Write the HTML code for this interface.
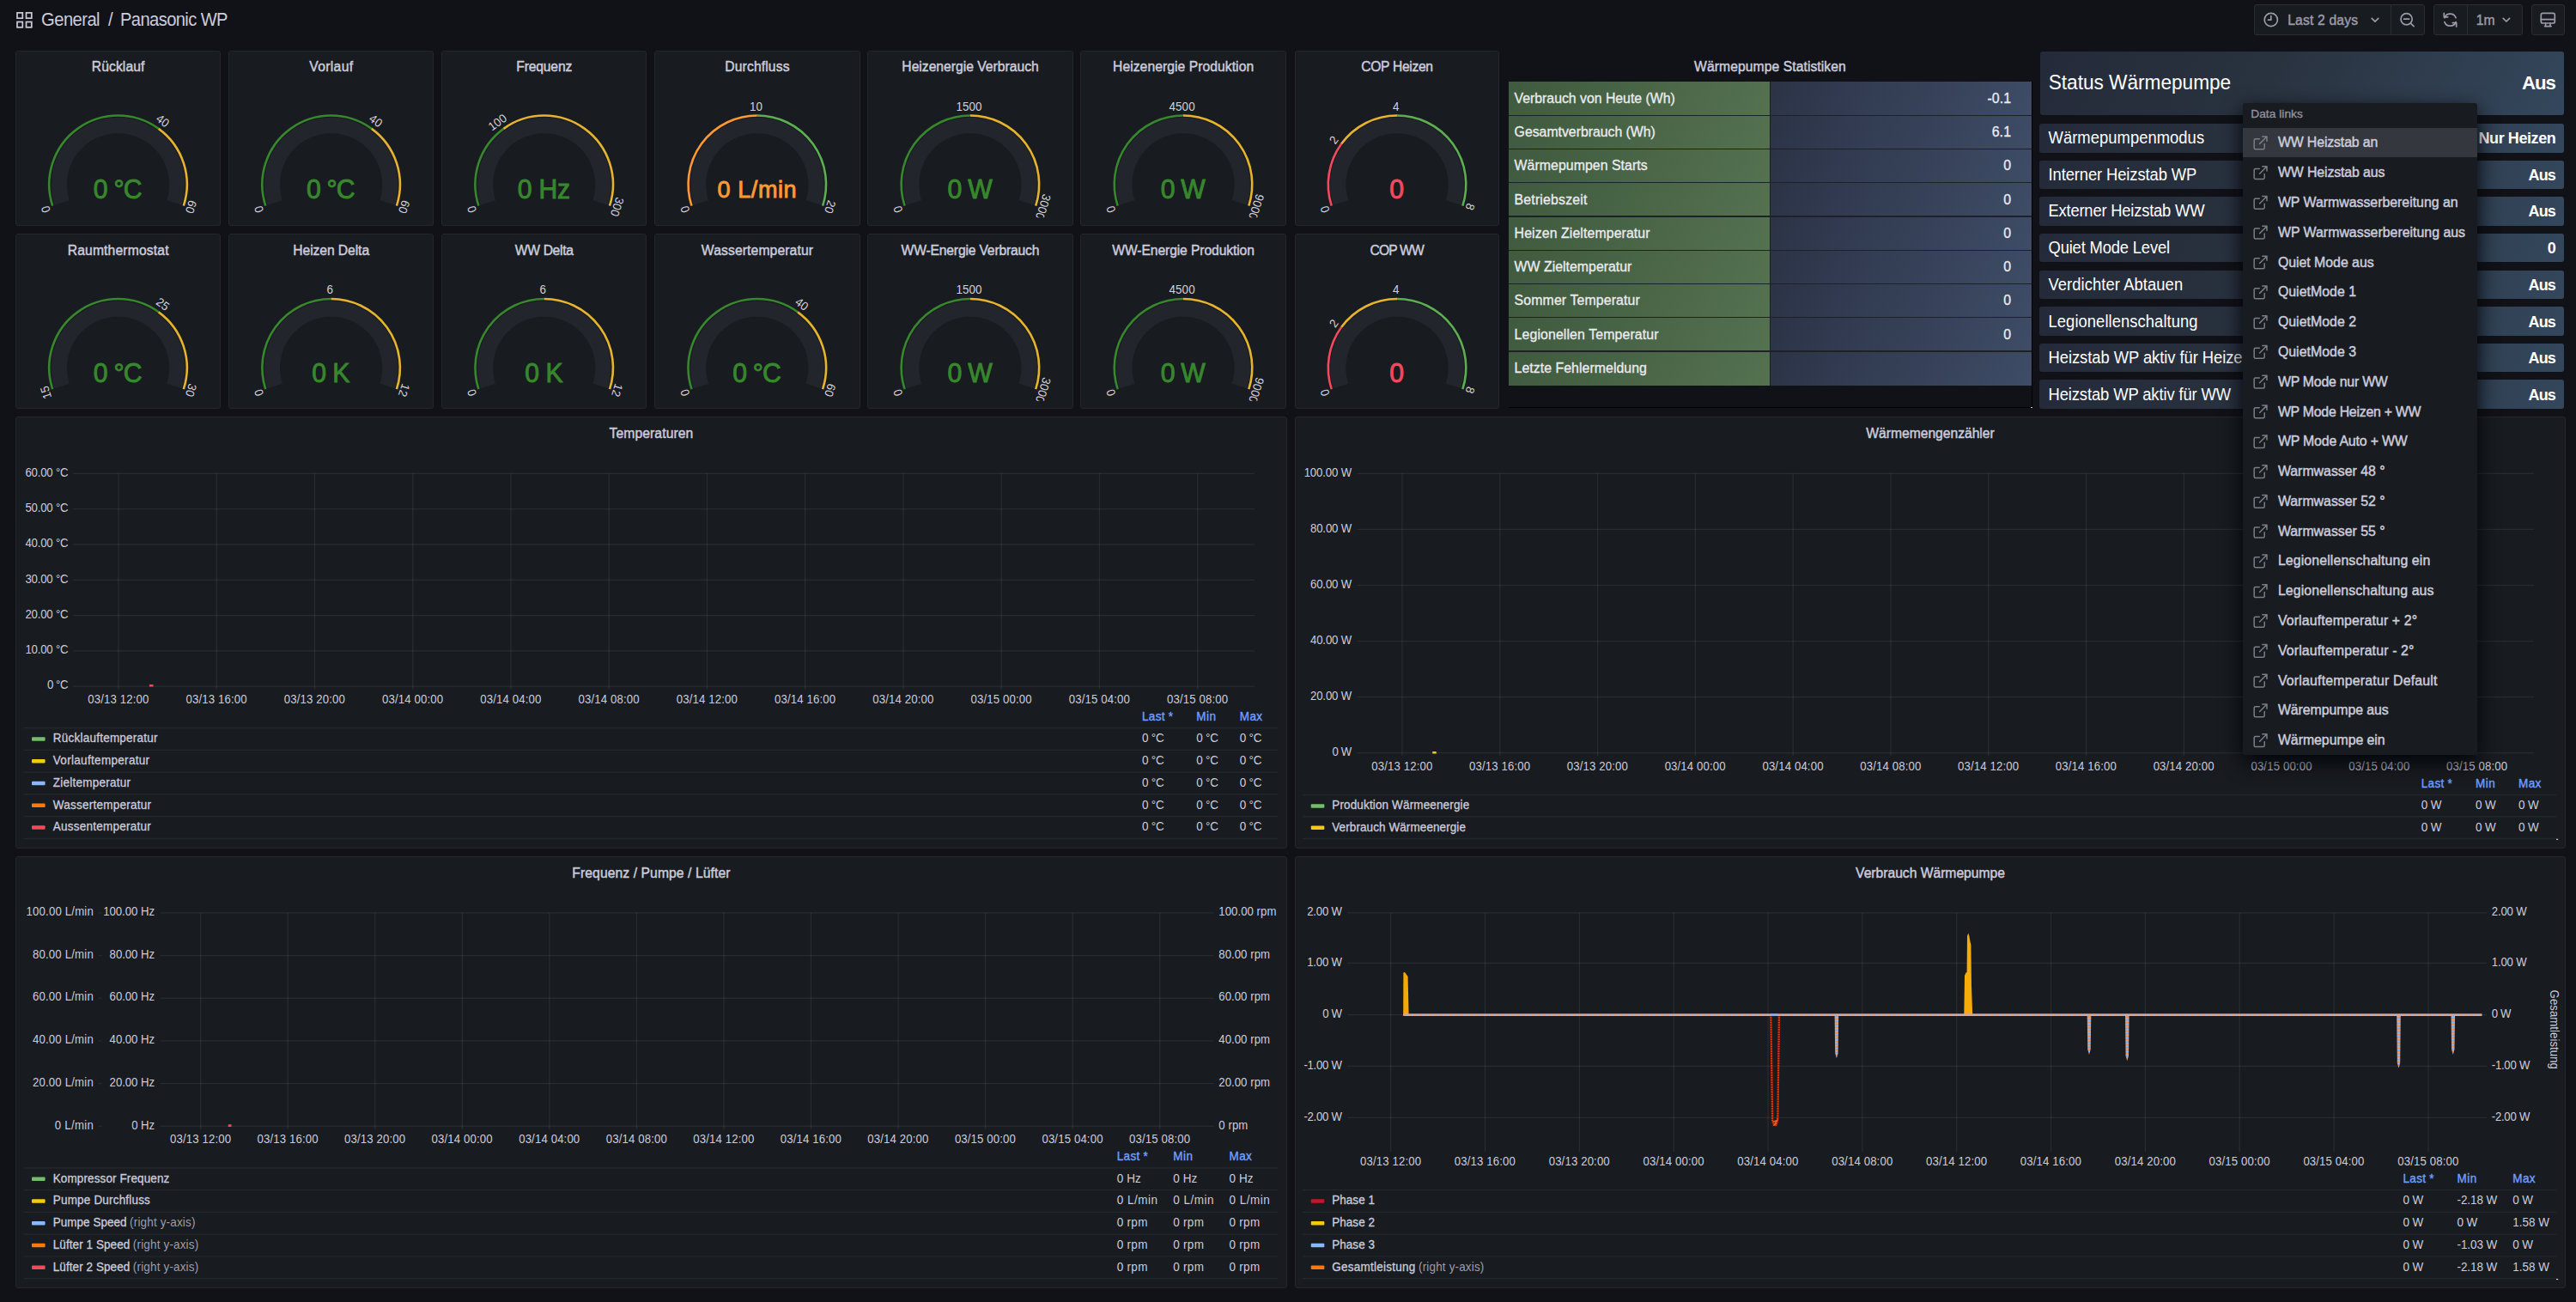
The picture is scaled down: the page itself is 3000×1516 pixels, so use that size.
<!DOCTYPE html>
<html lang="de"><head><meta charset="utf-8"><title>Panasonic WP - Grafana</title>
<style>
html,body{margin:0;padding:0;background:#111217}
body{width:3000px;height:1516px;overflow:hidden;position:relative;font-family:"Liberation Sans",sans-serif}
#wrap{position:absolute;left:0;top:0;width:3000px;height:1516px;overflow:hidden}
#wrap>div,#menu>div{position:absolute}
svg{position:absolute;left:0;top:0;font-family:"Liberation Sans",sans-serif}
text{white-space:pre}

</style></head><body><div id="wrap">
<div style="left:2625.10px;top:5.00px;width:159.50px;height:35.60px;background:#181b1f;border:1px solid #2a2d33;box-sizing:border-box;border-radius:3px 0 0 3px"></div>
<div style="left:2783.60px;top:5.00px;width:40.20px;height:35.60px;background:#181b1f;border:1px solid #2a2d33;box-sizing:border-box;border-radius:0 3px 3px 0"></div>
<div style="left:2833.80px;top:5.00px;width:40.40px;height:35.60px;background:#181b1f;border:1px solid #2a2d33;box-sizing:border-box;border-radius:3px 0 0 3px"></div>
<div style="left:2873.20px;top:5.00px;width:64.90px;height:35.60px;background:#181b1f;border:1px solid #2a2d33;box-sizing:border-box;border-radius:0 3px 3px 0"></div>
<div style="left:2947.90px;top:5.00px;width:39.50px;height:35.60px;background:#181b1f;border:1px solid #2a2d33;box-sizing:border-box;border-radius:3px"></div>
<div style="left:17.90px;top:58.90px;width:239.40px;height:204.00px;background:#181b1f;border:1px solid #23262b;border-radius:3px;box-sizing:border-box"></div>
<div style="left:266.00px;top:58.90px;width:239.40px;height:204.00px;background:#181b1f;border:1px solid #23262b;border-radius:3px;box-sizing:border-box"></div>
<div style="left:514.10px;top:58.90px;width:239.40px;height:204.00px;background:#181b1f;border:1px solid #23262b;border-radius:3px;box-sizing:border-box"></div>
<div style="left:762.20px;top:58.90px;width:239.40px;height:204.00px;background:#181b1f;border:1px solid #23262b;border-radius:3px;box-sizing:border-box"></div>
<div style="left:1010.30px;top:58.90px;width:239.40px;height:204.00px;background:#181b1f;border:1px solid #23262b;border-radius:3px;box-sizing:border-box"></div>
<div style="left:1258.40px;top:58.90px;width:239.40px;height:204.00px;background:#181b1f;border:1px solid #23262b;border-radius:3px;box-sizing:border-box"></div>
<div style="left:1507.80px;top:58.90px;width:238.70px;height:204.00px;background:#181b1f;border:1px solid #23262b;border-radius:3px;box-sizing:border-box"></div>
<div style="left:17.90px;top:272.30px;width:239.40px;height:203.60px;background:#181b1f;border:1px solid #23262b;border-radius:3px;box-sizing:border-box"></div>
<div style="left:266.00px;top:272.30px;width:239.40px;height:203.60px;background:#181b1f;border:1px solid #23262b;border-radius:3px;box-sizing:border-box"></div>
<div style="left:514.10px;top:272.30px;width:239.40px;height:203.60px;background:#181b1f;border:1px solid #23262b;border-radius:3px;box-sizing:border-box"></div>
<div style="left:762.20px;top:272.30px;width:239.40px;height:203.60px;background:#181b1f;border:1px solid #23262b;border-radius:3px;box-sizing:border-box"></div>
<div style="left:1010.30px;top:272.30px;width:239.40px;height:203.60px;background:#181b1f;border:1px solid #23262b;border-radius:3px;box-sizing:border-box"></div>
<div style="left:1258.40px;top:272.30px;width:239.40px;height:203.60px;background:#181b1f;border:1px solid #23262b;border-radius:3px;box-sizing:border-box"></div>
<div style="left:1507.80px;top:272.30px;width:238.70px;height:203.60px;background:#181b1f;border:1px solid #23262b;border-radius:3px;box-sizing:border-box"></div>
<div style="left:1756.90px;top:94.90px;width:304.10px;height:38.90px;background:linear-gradient(120deg,#3f5a3e 0%,#547150 100%)"></div>
<div style="left:2062.00px;top:94.90px;width:304.00px;height:38.90px;background:linear-gradient(120deg,#2c3347 0%,#3e4c66 100%)"></div>
<div style="left:2061.00px;top:94.90px;width:1.00px;height:38.90px;background:#1c2025"></div>
<div style="left:1756.90px;top:133.80px;width:609.10px;height:1.16px;background:#1e2227"></div>
<div style="left:1756.90px;top:134.96px;width:304.10px;height:38.07px;background:linear-gradient(120deg,#3f5a3e 0%,#547150 100%)"></div>
<div style="left:2062.00px;top:134.96px;width:304.00px;height:38.07px;background:linear-gradient(120deg,#2c3347 0%,#3e4c66 100%)"></div>
<div style="left:2061.00px;top:134.96px;width:1.00px;height:38.07px;background:#1c2025"></div>
<div style="left:1756.90px;top:173.03px;width:609.10px;height:1.16px;background:#1e2227"></div>
<div style="left:1756.90px;top:174.19px;width:304.10px;height:38.07px;background:linear-gradient(120deg,#3f5a3e 0%,#547150 100%)"></div>
<div style="left:2062.00px;top:174.19px;width:304.00px;height:38.07px;background:linear-gradient(120deg,#2c3347 0%,#3e4c66 100%)"></div>
<div style="left:2061.00px;top:174.19px;width:1.00px;height:38.07px;background:#1c2025"></div>
<div style="left:1756.90px;top:212.26px;width:609.10px;height:1.16px;background:#1e2227"></div>
<div style="left:1756.90px;top:213.42px;width:304.10px;height:38.07px;background:linear-gradient(120deg,#3f5a3e 0%,#547150 100%)"></div>
<div style="left:2062.00px;top:213.42px;width:304.00px;height:38.07px;background:linear-gradient(120deg,#2c3347 0%,#3e4c66 100%)"></div>
<div style="left:2061.00px;top:213.42px;width:1.00px;height:38.07px;background:#1c2025"></div>
<div style="left:1756.90px;top:251.49px;width:609.10px;height:1.16px;background:#1e2227"></div>
<div style="left:1756.90px;top:252.65px;width:304.10px;height:38.07px;background:linear-gradient(120deg,#3f5a3e 0%,#547150 100%)"></div>
<div style="left:2062.00px;top:252.65px;width:304.00px;height:38.07px;background:linear-gradient(120deg,#2c3347 0%,#3e4c66 100%)"></div>
<div style="left:2061.00px;top:252.65px;width:1.00px;height:38.07px;background:#1c2025"></div>
<div style="left:1756.90px;top:290.72px;width:609.10px;height:1.16px;background:#1e2227"></div>
<div style="left:1756.90px;top:291.88px;width:304.10px;height:38.07px;background:linear-gradient(120deg,#3f5a3e 0%,#547150 100%)"></div>
<div style="left:2062.00px;top:291.88px;width:304.00px;height:38.07px;background:linear-gradient(120deg,#2c3347 0%,#3e4c66 100%)"></div>
<div style="left:2061.00px;top:291.88px;width:1.00px;height:38.07px;background:#1c2025"></div>
<div style="left:1756.90px;top:329.95px;width:609.10px;height:1.16px;background:#1e2227"></div>
<div style="left:1756.90px;top:331.11px;width:304.10px;height:38.07px;background:linear-gradient(120deg,#3f5a3e 0%,#547150 100%)"></div>
<div style="left:2062.00px;top:331.11px;width:304.00px;height:38.07px;background:linear-gradient(120deg,#2c3347 0%,#3e4c66 100%)"></div>
<div style="left:2061.00px;top:331.11px;width:1.00px;height:38.07px;background:#1c2025"></div>
<div style="left:1756.90px;top:369.18px;width:609.10px;height:1.16px;background:#1e2227"></div>
<div style="left:1756.90px;top:370.34px;width:304.10px;height:38.07px;background:linear-gradient(120deg,#3f5a3e 0%,#547150 100%)"></div>
<div style="left:2062.00px;top:370.34px;width:304.00px;height:38.07px;background:linear-gradient(120deg,#2c3347 0%,#3e4c66 100%)"></div>
<div style="left:2061.00px;top:370.34px;width:1.00px;height:38.07px;background:#1c2025"></div>
<div style="left:1756.90px;top:408.41px;width:609.10px;height:1.16px;background:#1e2227"></div>
<div style="left:1756.90px;top:409.57px;width:304.10px;height:39.43px;background:linear-gradient(120deg,#3f5a3e 0%,#547150 100%)"></div>
<div style="left:2062.00px;top:409.57px;width:304.00px;height:39.43px;background:linear-gradient(120deg,#2c3347 0%,#3e4c66 100%)"></div>
<div style="left:2061.00px;top:409.57px;width:1.00px;height:39.43px;background:#1c2025"></div>
<div style="left:1756.90px;top:474.00px;width:610.60px;height:1.20px;background:#000"></div>
<div style="left:2366.05px;top:94.80px;width:1.25px;height:380.40px;background:#000"></div>
<div style="left:2365.20px;top:474.05px;width:2.20px;height:1.00px;background:#c4c4c4"></div>
<div style="left:2376.10px;top:59.90px;width:609.90px;height:73.90px;background:linear-gradient(120deg,#242a39 0%,#29323f 42%,#34475c 100%);border-radius:3px"></div>
<div style="left:2375.30px;top:144.30px;width:611.10px;height:33.45px;background:linear-gradient(120deg,#242a39 0%,#29323f 42%,#34475c 100%);border-radius:3px"></div>
<div style="left:2375.30px;top:186.87px;width:611.10px;height:33.45px;background:linear-gradient(120deg,#242a39 0%,#29323f 42%,#34475c 100%);border-radius:3px"></div>
<div style="left:2375.30px;top:229.44px;width:611.10px;height:33.45px;background:linear-gradient(120deg,#242a39 0%,#29323f 42%,#34475c 100%);border-radius:3px"></div>
<div style="left:2375.30px;top:272.01px;width:611.10px;height:33.45px;background:linear-gradient(120deg,#242a39 0%,#29323f 42%,#34475c 100%);border-radius:3px"></div>
<div style="left:2375.30px;top:314.58px;width:611.10px;height:33.45px;background:linear-gradient(120deg,#242a39 0%,#29323f 42%,#34475c 100%);border-radius:3px"></div>
<div style="left:2375.30px;top:357.15px;width:611.10px;height:33.45px;background:linear-gradient(120deg,#242a39 0%,#29323f 42%,#34475c 100%);border-radius:3px"></div>
<div style="left:2375.30px;top:399.72px;width:611.10px;height:33.45px;background:linear-gradient(120deg,#242a39 0%,#29323f 42%,#34475c 100%);border-radius:3px"></div>
<div style="left:2375.30px;top:442.29px;width:611.10px;height:33.45px;background:linear-gradient(120deg,#242a39 0%,#29323f 42%,#34475c 100%);border-radius:3px"></div>
<div style="left:17.90px;top:484.80px;width:1481.10px;height:503.10px;background:#181b1f;border:1px solid #23262b;border-radius:3px;box-sizing:border-box"></div>
<div style="left:1507.80px;top:484.80px;width:1480.00px;height:503.10px;background:#181b1f;border:1px solid #23262b;border-radius:3px;box-sizing:border-box"></div>
<div style="left:17.90px;top:997.00px;width:1481.10px;height:502.90px;background:#181b1f;border:1px solid #23262b;border-radius:3px;box-sizing:border-box"></div>
<div style="left:1507.80px;top:997.00px;width:1480.00px;height:502.90px;background:#181b1f;border:1px solid #23262b;border-radius:3px;box-sizing:border-box"></div>
<svg width="3000" height="1516" viewBox="0 0 3000 1516">
<rect x="20.0" y="14.9" width="6.3" height="6.3" fill="none" stroke="#ccccdc" stroke-width="1.7"/>
<rect x="30.5" y="14.9" width="6.3" height="6.3" fill="none" stroke="#ccccdc" stroke-width="1.7"/>
<rect x="20.0" y="25.5" width="6.3" height="6.3" fill="none" stroke="#ccccdc" stroke-width="1.7"/>
<rect x="30.5" y="25.5" width="6.3" height="6.3" fill="none" stroke="#ccccdc" stroke-width="1.7"/>
<text transform="translate(48.10,30.00) scale(1,1.090)" font-size="20.16" fill="#ccccdc" letter-spacing="-0.546">General</text>
<text transform="translate(126.00,30.00) scale(1,1.090)" font-size="20.16" fill="#ccccdc" letter-spacing="2.717">/</text>
<text transform="translate(140.00,30.00) scale(1,1.090)" font-size="20.16" fill="#ccccdc" letter-spacing="-0.602">Panasonic WP</text>
<circle cx="2644.8" cy="23" r="7.6" fill="none" stroke="#9a9aa8" stroke-width="1.7" stroke-linecap="round" stroke-linejoin="round"/>
<path d="M2644.8 18.6v4.6h-3.2" fill="none" stroke="#9a9aa8" stroke-width="1.7" stroke-linecap="round" stroke-linejoin="round"/>
<text transform="translate(2664.20,28.70) scale(1,1.050)" font-size="15.68" fill="#9a9aa8" letter-spacing="0.164" stroke="#9a9aa8" stroke-width="0.44">Last 2 days</text>
<path d="M2762.2 21.3l3.8 3.8 3.8-3.8" fill="none" stroke="#9a9aa8" stroke-width="1.7" stroke-linecap="round" stroke-linejoin="round"/>
<circle cx="2802.6" cy="22.2" r="6.6" fill="none" stroke="#9a9aa8" stroke-width="1.7" stroke-linecap="round" stroke-linejoin="round"/>
<path d="M2799.6 22.2h6M2807.5 27.1l3.6 3.6" fill="none" stroke="#9a9aa8" stroke-width="1.7" stroke-linecap="round" stroke-linejoin="round"/>
<path d="M2846.92 20.81A7.0 7.0 0 0 1 2860.08 20.81" fill="none" stroke="#9a9aa8" stroke-width="1.7" stroke-linecap="round" stroke-linejoin="round"/>
<path d="M2860.08 25.59A7.0 7.0 0 0 1 2846.92 25.59" fill="none" stroke="#9a9aa8" stroke-width="1.7" stroke-linecap="round" stroke-linejoin="round"/>
<path d="M2846.32 15.41v4.4h4.4" fill="none" stroke="#9a9aa8" stroke-width="1.7" stroke-linecap="round" stroke-linejoin="round"/>
<path d="M2860.68 30.99v-4.4h-4.4" fill="none" stroke="#9a9aa8" stroke-width="1.7" stroke-linecap="round" stroke-linejoin="round"/>
<text transform="translate(2883.70,28.70) scale(1,1.050)" font-size="15.68" fill="#9a9aa8" stroke="#9a9aa8" stroke-width="0.44">1m</text>
<path d="M2915.2 21.3l3.7 3.7 3.7-3.7" fill="none" stroke="#9a9aa8" stroke-width="1.7" stroke-linecap="round" stroke-linejoin="round"/>
<rect x="2959.3" y="15.4" width="16" height="11.6" rx="2" fill="none" stroke="#9a9aa8" stroke-width="1.7" stroke-linecap="round" stroke-linejoin="round"/>
<path d="M2959.3 22.6h16M2963.6 30.6h7.4M2964.6 27.2v3.2M2970 27.2v3.2" fill="none" stroke="#9a9aa8" stroke-width="1.7" stroke-linecap="round" stroke-linejoin="round"/>
<text transform="translate(137.64,83.20) scale(1,1.100)" font-size="15.68" fill="#ccccdc" letter-spacing="0.084" text-anchor="middle" stroke="#ccccdc" stroke-width="0.44">Rücklauf</text>
<clipPath id="c17_59"><rect x="26.9" y="99.0" width="221.4" height="154.2"/></clipPath>
<g clip-path="url(#c17_59)">
<path d="M72.11 235.99A68.75 68.75 0 1 1 202.89 235.99" fill="none" stroke="#22252b" stroke-width="18.30"/>
<path d="M61.18 239.55A80.25 80.25 0 0 1 184.67 149.83" fill="none" stroke="#37872d" stroke-width="2.60"/>
<path d="M184.67 149.83A80.25 80.25 0 0 1 213.82 239.55" fill="none" stroke="#e6b32e" stroke-width="2.60"/>
<text transform="translate(57.96,242.07) rotate(252.00) scale(1,1.030)" font-size="13.40" fill="#d0d0de" letter-spacing="0.079" text-anchor="middle">0</text>
<text transform="translate(186.82,144.50) rotate(396.00) scale(1,1.030)" font-size="13.40" fill="#d0d0de" letter-spacing="0.079" text-anchor="middle">40</text>
<text transform="translate(217.98,239.42) rotate(468.00) scale(1,1.030)" font-size="13.40" fill="#d0d0de" letter-spacing="0.079" text-anchor="middle">60</text>
</g>
<text transform="translate(136.80,231.35) scale(1,1.050)" font-size="30.20" fill="#37872d" letter-spacing="-0.796" text-anchor="middle" stroke="#37872d" stroke-width="0.90">0 °C</text>
<text transform="translate(385.86,83.20) scale(1,1.100)" font-size="15.68" fill="#ccccdc" letter-spacing="0.314" text-anchor="middle" stroke="#ccccdc" stroke-width="0.44">Vorlauf</text>
<clipPath id="c266_59"><rect x="275.0" y="99.0" width="221.4" height="154.2"/></clipPath>
<g clip-path="url(#c266_59)">
<path d="M320.21 235.99A68.75 68.75 0 1 1 450.99 235.99" fill="none" stroke="#22252b" stroke-width="18.30"/>
<path d="M309.28 239.55A80.25 80.25 0 0 1 432.77 149.83" fill="none" stroke="#37872d" stroke-width="2.60"/>
<path d="M432.77 149.83A80.25 80.25 0 0 1 461.92 239.55" fill="none" stroke="#e6b32e" stroke-width="2.60"/>
<text transform="translate(306.06,242.07) rotate(252.00) scale(1,1.030)" font-size="13.40" fill="#d0d0de" letter-spacing="0.079" text-anchor="middle">0</text>
<text transform="translate(434.92,144.50) rotate(396.00) scale(1,1.030)" font-size="13.40" fill="#d0d0de" letter-spacing="0.079" text-anchor="middle">40</text>
<text transform="translate(466.08,239.42) rotate(468.00) scale(1,1.030)" font-size="13.40" fill="#d0d0de" letter-spacing="0.079" text-anchor="middle">60</text>
</g>
<text transform="translate(384.90,231.35) scale(1,1.050)" font-size="30.20" fill="#37872d" letter-spacing="-0.796" text-anchor="middle" stroke="#37872d" stroke-width="0.90">0 °C</text>
<text transform="translate(633.71,83.20) scale(1,1.100)" font-size="15.68" fill="#ccccdc" letter-spacing="-0.174" text-anchor="middle" stroke="#ccccdc" stroke-width="0.44">Frequenz</text>
<clipPath id="c514_59"><rect x="523.1" y="99.0" width="221.4" height="154.2"/></clipPath>
<g clip-path="url(#c514_59)">
<path d="M568.31 235.99A68.75 68.75 0 1 1 699.09 235.99" fill="none" stroke="#22252b" stroke-width="18.30"/>
<path d="M557.38 239.55A80.25 80.25 0 0 1 586.53 149.83" fill="none" stroke="#37872d" stroke-width="2.60"/>
<path d="M586.53 149.83A80.25 80.25 0 0 1 710.02 239.55" fill="none" stroke="#e6b32e" stroke-width="2.60"/>
<text transform="translate(554.16,242.07) rotate(252.00) scale(1,1.030)" font-size="13.40" fill="#d0d0de" letter-spacing="0.079" text-anchor="middle">0</text>
<text transform="translate(582.16,146.17) rotate(324.00) scale(1,1.030)" font-size="13.40" fill="#d0d0de" letter-spacing="0.079" text-anchor="middle">100</text>
<text transform="translate(714.18,239.42) rotate(468.00) scale(1,1.030)" font-size="13.40" fill="#d0d0de" letter-spacing="0.079" text-anchor="middle">300</text>
</g>
<text transform="translate(633.31,231.35) scale(1,1.050)" font-size="30.20" fill="#37872d" letter-spacing="-0.184" text-anchor="middle" stroke="#37872d" stroke-width="0.90">0 Hz</text>
<text transform="translate(881.97,83.20) scale(1,1.100)" font-size="15.68" fill="#ccccdc" letter-spacing="0.138" text-anchor="middle" stroke="#ccccdc" stroke-width="0.44">Durchfluss</text>
<clipPath id="c762_59"><rect x="771.2" y="99.0" width="221.4" height="154.2"/></clipPath>
<g clip-path="url(#c762_59)">
<path d="M816.41 235.99A68.75 68.75 0 1 1 947.19 235.99" fill="none" stroke="#22252b" stroke-width="18.30"/>
<path d="M805.48 239.55A80.25 80.25 0 0 1 881.80 134.50" fill="none" stroke="#ff9830" stroke-width="2.60"/>
<path d="M881.80 134.50A80.25 80.25 0 0 1 958.12 239.55" fill="none" stroke="#5cae50" stroke-width="2.60"/>
<text transform="translate(802.26,242.07) rotate(252.00) scale(1,1.030)" font-size="13.40" fill="#d0d0de" letter-spacing="0.079" text-anchor="middle">0</text>
<text transform="translate(880.41,128.66) rotate(360.00) scale(1,1.030)" font-size="13.40" fill="#d0d0de" letter-spacing="0.079" text-anchor="middle">10</text>
<text transform="translate(962.28,239.42) rotate(468.00) scale(1,1.030)" font-size="13.40" fill="#d0d0de" letter-spacing="0.079" text-anchor="middle">20</text>
</g>
<text transform="translate(881.81,230.20) scale(1,1.050)" font-size="27.00" fill="#ff9830" letter-spacing="0.610" text-anchor="middle" stroke="#ff9830" stroke-width="0.90">0 L/min</text>
<text transform="translate(1130.00,83.20) scale(1,1.100)" font-size="15.68" fill="#ccccdc" text-anchor="middle" stroke="#ccccdc" stroke-width="0.44">Heizenergie Verbrauch</text>
<clipPath id="c1010_59"><rect x="1019.3" y="99.0" width="221.4" height="154.2"/></clipPath>
<g clip-path="url(#c1010_59)">
<path d="M1064.51 235.99A68.75 68.75 0 1 1 1195.29 235.99" fill="none" stroke="#22252b" stroke-width="18.30"/>
<path d="M1053.58 239.55A80.25 80.25 0 0 1 1129.90 134.50" fill="none" stroke="#37872d" stroke-width="2.60"/>
<path d="M1129.90 134.50A80.25 80.25 0 0 1 1206.22 239.55" fill="none" stroke="#e6b32e" stroke-width="2.60"/>
<text transform="translate(1050.36,242.07) rotate(252.00) scale(1,1.030)" font-size="13.40" fill="#d0d0de" letter-spacing="0.079" text-anchor="middle">0</text>
<text transform="translate(1128.51,128.66) rotate(360.00) scale(1,1.030)" font-size="13.40" fill="#d0d0de" letter-spacing="0.079" text-anchor="middle">1500</text>
<text transform="translate(1210.38,239.42) rotate(468.00) scale(1,1.030)" font-size="13.40" fill="#d0d0de" letter-spacing="0.079" text-anchor="middle">3000</text>
</g>
<text transform="translate(1129.20,231.35) scale(1,1.050)" font-size="30.20" fill="#37872d" letter-spacing="-0.806" text-anchor="middle" stroke="#37872d" stroke-width="0.90">0 W</text>
<text transform="translate(1378.13,83.20) scale(1,1.100)" font-size="15.68" fill="#ccccdc" letter-spacing="0.060" text-anchor="middle" stroke="#ccccdc" stroke-width="0.44">Heizenergie Produktion</text>
<clipPath id="c1258_59"><rect x="1267.4" y="99.0" width="221.4" height="154.2"/></clipPath>
<g clip-path="url(#c1258_59)">
<path d="M1312.61 235.99A68.75 68.75 0 1 1 1443.39 235.99" fill="none" stroke="#22252b" stroke-width="18.30"/>
<path d="M1301.68 239.55A80.25 80.25 0 0 1 1378.00 134.50" fill="none" stroke="#37872d" stroke-width="2.60"/>
<path d="M1378.00 134.50A80.25 80.25 0 0 1 1454.32 239.55" fill="none" stroke="#e6b32e" stroke-width="2.60"/>
<text transform="translate(1298.46,242.07) rotate(252.00) scale(1,1.030)" font-size="13.40" fill="#d0d0de" letter-spacing="0.079" text-anchor="middle">0</text>
<text transform="translate(1376.61,128.66) rotate(360.00) scale(1,1.030)" font-size="13.40" fill="#d0d0de" letter-spacing="0.079" text-anchor="middle">4500</text>
<text transform="translate(1458.48,239.42) rotate(468.00) scale(1,1.030)" font-size="13.40" fill="#d0d0de" letter-spacing="0.079" text-anchor="middle">9000</text>
</g>
<text transform="translate(1377.30,231.35) scale(1,1.050)" font-size="30.20" fill="#37872d" letter-spacing="-0.806" text-anchor="middle" stroke="#37872d" stroke-width="0.90">0 W</text>
<text transform="translate(1626.98,83.20) scale(1,1.100)" font-size="15.68" fill="#ccccdc" letter-spacing="-0.338" text-anchor="middle" stroke="#ccccdc" stroke-width="0.44">COP Heizen</text>
<clipPath id="c1507_59"><rect x="1516.8" y="99.0" width="220.7" height="154.2"/></clipPath>
<g clip-path="url(#c1507_59)">
<path d="M1561.66 235.99A68.75 68.75 0 1 1 1692.44 235.99" fill="none" stroke="#22252b" stroke-width="18.30"/>
<path d="M1550.73 239.55A80.25 80.25 0 0 1 1562.13 167.58" fill="none" stroke="#f2495c" stroke-width="2.60"/>
<path d="M1562.13 167.58A80.25 80.25 0 0 1 1627.05 134.50" fill="none" stroke="#e6b32e" stroke-width="2.60"/>
<path d="M1627.05 134.50A80.25 80.25 0 0 1 1703.37 239.55" fill="none" stroke="#5cae50" stroke-width="2.60"/>
<text transform="translate(1547.51,242.07) rotate(252.00) scale(1,1.030)" font-size="13.40" fill="#d0d0de" letter-spacing="0.079" text-anchor="middle">0</text>
<text transform="translate(1557.11,165.66) rotate(306.00) scale(1,1.030)" font-size="13.40" fill="#d0d0de" letter-spacing="0.079" text-anchor="middle">2</text>
<text transform="translate(1625.66,128.66) rotate(360.00) scale(1,1.030)" font-size="13.40" fill="#d0d0de" letter-spacing="0.079" text-anchor="middle">4</text>
<text transform="translate(1707.53,239.42) rotate(468.00) scale(1,1.030)" font-size="13.40" fill="#d0d0de" letter-spacing="0.079" text-anchor="middle">8</text>
</g>
<text transform="translate(1626.93,231.35) scale(1,1.050)" font-size="30.20" fill="#f2495c" letter-spacing="0.369" text-anchor="middle" stroke="#f2495c" stroke-width="0.90">0</text>
<text transform="translate(137.68,296.70) scale(1,1.100)" font-size="15.68" fill="#ccccdc" letter-spacing="0.158" text-anchor="middle" stroke="#ccccdc" stroke-width="0.44">Raumthermostat</text>
<clipPath id="c17_272"><rect x="26.9" y="312.5" width="221.4" height="154.2"/></clipPath>
<g clip-path="url(#c17_272)">
<path d="M72.11 449.49A68.75 68.75 0 1 1 202.89 449.49" fill="none" stroke="#22252b" stroke-width="18.30"/>
<path d="M61.18 453.05A80.25 80.25 0 0 1 184.67 363.33" fill="none" stroke="#37872d" stroke-width="2.60"/>
<path d="M184.67 363.33A80.25 80.25 0 0 1 213.82 453.05" fill="none" stroke="#e6b32e" stroke-width="2.60"/>
<text transform="translate(57.96,455.57) rotate(252.00) scale(1,1.030)" font-size="13.40" fill="#d0d0de" letter-spacing="0.079" text-anchor="middle">15</text>
<text transform="translate(186.82,358.00) rotate(396.00) scale(1,1.030)" font-size="13.40" fill="#d0d0de" letter-spacing="0.079" text-anchor="middle">25</text>
<text transform="translate(217.98,452.92) rotate(468.00) scale(1,1.030)" font-size="13.40" fill="#d0d0de" letter-spacing="0.079" text-anchor="middle">30</text>
</g>
<text transform="translate(136.80,444.85) scale(1,1.050)" font-size="30.20" fill="#37872d" letter-spacing="-0.796" text-anchor="middle" stroke="#37872d" stroke-width="0.90">0 °C</text>
<text transform="translate(385.66,296.70) scale(1,1.100)" font-size="15.68" fill="#ccccdc" letter-spacing="-0.084" text-anchor="middle" stroke="#ccccdc" stroke-width="0.44">Heizen Delta</text>
<clipPath id="c266_272"><rect x="275.0" y="312.5" width="221.4" height="154.2"/></clipPath>
<g clip-path="url(#c266_272)">
<path d="M320.21 449.49A68.75 68.75 0 1 1 450.99 449.49" fill="none" stroke="#22252b" stroke-width="18.30"/>
<path d="M309.28 453.05A80.25 80.25 0 0 1 385.60 348.00" fill="none" stroke="#37872d" stroke-width="2.60"/>
<path d="M385.60 348.00A80.25 80.25 0 0 1 461.92 453.05" fill="none" stroke="#e6b32e" stroke-width="2.60"/>
<text transform="translate(306.06,455.57) rotate(252.00) scale(1,1.030)" font-size="13.40" fill="#d0d0de" letter-spacing="0.079" text-anchor="middle">0</text>
<text transform="translate(384.21,342.16) rotate(360.00) scale(1,1.030)" font-size="13.40" fill="#d0d0de" letter-spacing="0.079" text-anchor="middle">6</text>
<text transform="translate(466.08,452.92) rotate(468.00) scale(1,1.030)" font-size="13.40" fill="#d0d0de" letter-spacing="0.079" text-anchor="middle">12</text>
</g>
<text transform="translate(385.03,444.85) scale(1,1.050)" font-size="30.20" fill="#37872d" letter-spacing="-0.536" text-anchor="middle" stroke="#37872d" stroke-width="0.90">0 K</text>
<text transform="translate(633.63,296.70) scale(1,1.100)" font-size="15.68" fill="#ccccdc" letter-spacing="-0.333" text-anchor="middle" stroke="#ccccdc" stroke-width="0.44">WW Delta</text>
<clipPath id="c514_272"><rect x="523.1" y="312.5" width="221.4" height="154.2"/></clipPath>
<g clip-path="url(#c514_272)">
<path d="M568.31 449.49A68.75 68.75 0 1 1 699.09 449.49" fill="none" stroke="#22252b" stroke-width="18.30"/>
<path d="M557.38 453.05A80.25 80.25 0 0 1 633.70 348.00" fill="none" stroke="#37872d" stroke-width="2.60"/>
<path d="M633.70 348.00A80.25 80.25 0 0 1 710.02 453.05" fill="none" stroke="#e6b32e" stroke-width="2.60"/>
<text transform="translate(554.16,455.57) rotate(252.00) scale(1,1.030)" font-size="13.40" fill="#d0d0de" letter-spacing="0.079" text-anchor="middle">0</text>
<text transform="translate(632.31,342.16) rotate(360.00) scale(1,1.030)" font-size="13.40" fill="#d0d0de" letter-spacing="0.079" text-anchor="middle">6</text>
<text transform="translate(714.18,452.92) rotate(468.00) scale(1,1.030)" font-size="13.40" fill="#d0d0de" letter-spacing="0.079" text-anchor="middle">12</text>
</g>
<text transform="translate(633.13,444.85) scale(1,1.050)" font-size="30.20" fill="#37872d" letter-spacing="-0.536" text-anchor="middle" stroke="#37872d" stroke-width="0.90">0 K</text>
<text transform="translate(881.96,296.70) scale(1,1.100)" font-size="15.68" fill="#ccccdc" letter-spacing="0.120" text-anchor="middle" stroke="#ccccdc" stroke-width="0.44">Wassertemperatur</text>
<clipPath id="c762_272"><rect x="771.2" y="312.5" width="221.4" height="154.2"/></clipPath>
<g clip-path="url(#c762_272)">
<path d="M816.41 449.49A68.75 68.75 0 1 1 947.19 449.49" fill="none" stroke="#22252b" stroke-width="18.30"/>
<path d="M805.48 453.05A80.25 80.25 0 0 1 928.97 363.33" fill="none" stroke="#37872d" stroke-width="2.60"/>
<path d="M928.97 363.33A80.25 80.25 0 0 1 958.12 453.05" fill="none" stroke="#e6b32e" stroke-width="2.60"/>
<text transform="translate(802.26,455.57) rotate(252.00) scale(1,1.030)" font-size="13.40" fill="#d0d0de" letter-spacing="0.079" text-anchor="middle">0</text>
<text transform="translate(931.12,358.00) rotate(396.00) scale(1,1.030)" font-size="13.40" fill="#d0d0de" letter-spacing="0.079" text-anchor="middle">40</text>
<text transform="translate(962.28,452.92) rotate(468.00) scale(1,1.030)" font-size="13.40" fill="#d0d0de" letter-spacing="0.079" text-anchor="middle">60</text>
</g>
<text transform="translate(881.10,444.85) scale(1,1.050)" font-size="30.20" fill="#37872d" letter-spacing="-0.796" text-anchor="middle" stroke="#37872d" stroke-width="0.90">0 °C</text>
<text transform="translate(1129.91,296.70) scale(1,1.100)" font-size="15.68" fill="#ccccdc" letter-spacing="-0.178" text-anchor="middle" stroke="#ccccdc" stroke-width="0.44">WW-Energie Verbrauch</text>
<clipPath id="c1010_272"><rect x="1019.3" y="312.5" width="221.4" height="154.2"/></clipPath>
<g clip-path="url(#c1010_272)">
<path d="M1064.51 449.49A68.75 68.75 0 1 1 1195.29 449.49" fill="none" stroke="#22252b" stroke-width="18.30"/>
<path d="M1053.58 453.05A80.25 80.25 0 0 1 1129.90 348.00" fill="none" stroke="#37872d" stroke-width="2.60"/>
<path d="M1129.90 348.00A80.25 80.25 0 0 1 1206.22 453.05" fill="none" stroke="#e6b32e" stroke-width="2.60"/>
<text transform="translate(1050.36,455.57) rotate(252.00) scale(1,1.030)" font-size="13.40" fill="#d0d0de" letter-spacing="0.079" text-anchor="middle">0</text>
<text transform="translate(1128.51,342.16) rotate(360.00) scale(1,1.030)" font-size="13.40" fill="#d0d0de" letter-spacing="0.079" text-anchor="middle">1500</text>
<text transform="translate(1210.38,452.92) rotate(468.00) scale(1,1.030)" font-size="13.40" fill="#d0d0de" letter-spacing="0.079" text-anchor="middle">3000</text>
</g>
<text transform="translate(1129.20,444.85) scale(1,1.050)" font-size="30.20" fill="#37872d" letter-spacing="-0.806" text-anchor="middle" stroke="#37872d" stroke-width="0.90">0 W</text>
<text transform="translate(1378.05,296.70) scale(1,1.100)" font-size="15.68" fill="#ccccdc" letter-spacing="-0.104" text-anchor="middle" stroke="#ccccdc" stroke-width="0.44">WW-Energie Produktion</text>
<clipPath id="c1258_272"><rect x="1267.4" y="312.5" width="221.4" height="154.2"/></clipPath>
<g clip-path="url(#c1258_272)">
<path d="M1312.61 449.49A68.75 68.75 0 1 1 1443.39 449.49" fill="none" stroke="#22252b" stroke-width="18.30"/>
<path d="M1301.68 453.05A80.25 80.25 0 0 1 1378.00 348.00" fill="none" stroke="#37872d" stroke-width="2.60"/>
<path d="M1378.00 348.00A80.25 80.25 0 0 1 1454.32 453.05" fill="none" stroke="#e6b32e" stroke-width="2.60"/>
<text transform="translate(1298.46,455.57) rotate(252.00) scale(1,1.030)" font-size="13.40" fill="#d0d0de" letter-spacing="0.079" text-anchor="middle">0</text>
<text transform="translate(1376.61,342.16) rotate(360.00) scale(1,1.030)" font-size="13.40" fill="#d0d0de" letter-spacing="0.079" text-anchor="middle">4500</text>
<text transform="translate(1458.48,452.92) rotate(468.00) scale(1,1.030)" font-size="13.40" fill="#d0d0de" letter-spacing="0.079" text-anchor="middle">9000</text>
</g>
<text transform="translate(1377.30,444.85) scale(1,1.050)" font-size="30.20" fill="#37872d" letter-spacing="-0.806" text-anchor="middle" stroke="#37872d" stroke-width="0.90">0 W</text>
<text transform="translate(1626.73,296.70) scale(1,1.100)" font-size="15.68" fill="#ccccdc" letter-spacing="-0.841" text-anchor="middle" stroke="#ccccdc" stroke-width="0.44">COP WW</text>
<clipPath id="c1507_272"><rect x="1516.8" y="312.5" width="220.7" height="154.2"/></clipPath>
<g clip-path="url(#c1507_272)">
<path d="M1561.66 449.49A68.75 68.75 0 1 1 1692.44 449.49" fill="none" stroke="#22252b" stroke-width="18.30"/>
<path d="M1550.73 453.05A80.25 80.25 0 0 1 1562.13 381.08" fill="none" stroke="#f2495c" stroke-width="2.60"/>
<path d="M1562.13 381.08A80.25 80.25 0 0 1 1627.05 348.00" fill="none" stroke="#e6b32e" stroke-width="2.60"/>
<path d="M1627.05 348.00A80.25 80.25 0 0 1 1703.37 453.05" fill="none" stroke="#5cae50" stroke-width="2.60"/>
<text transform="translate(1547.51,455.57) rotate(252.00) scale(1,1.030)" font-size="13.40" fill="#d0d0de" letter-spacing="0.079" text-anchor="middle">0</text>
<text transform="translate(1557.11,379.16) rotate(306.00) scale(1,1.030)" font-size="13.40" fill="#d0d0de" letter-spacing="0.079" text-anchor="middle">2</text>
<text transform="translate(1625.66,342.16) rotate(360.00) scale(1,1.030)" font-size="13.40" fill="#d0d0de" letter-spacing="0.079" text-anchor="middle">4</text>
<text transform="translate(1707.53,452.92) rotate(468.00) scale(1,1.030)" font-size="13.40" fill="#d0d0de" letter-spacing="0.079" text-anchor="middle">8</text>
</g>
<text transform="translate(1626.93,444.85) scale(1,1.050)" font-size="30.20" fill="#f2495c" letter-spacing="0.369" text-anchor="middle" stroke="#f2495c" stroke-width="0.90">0</text>
<text transform="translate(2061.49,83.20) scale(1,1.100)" font-size="15.68" fill="#ccccdc" letter-spacing="0.078" text-anchor="middle" stroke="#ccccdc" stroke-width="0.44">Wärmepumpe Statistiken</text>
<text transform="translate(1763.60,119.98) scale(1,1.080)" font-size="15.90" fill="#ececf0" letter-spacing="-0.039" stroke="#ececf0" stroke-width="0.30">Verbrauch von Heute (Wh)</text>
<text transform="translate(2342.09,119.98) scale(1,1.080)" font-size="15.90" fill="#ececf0" letter-spacing="0.085" text-anchor="end" stroke="#ececf0" stroke-width="0.30">-0.1</text>
<text transform="translate(1763.60,159.21) scale(1,1.080)" font-size="15.90" fill="#ececf0" letter-spacing="-0.043" stroke="#ececf0" stroke-width="0.30">Gesamtverbrauch (Wh)</text>
<text transform="translate(2342.14,159.21) scale(1,1.080)" font-size="15.90" fill="#ececf0" letter-spacing="0.137" text-anchor="end" stroke="#ececf0" stroke-width="0.30">6.1</text>
<text transform="translate(1763.60,198.44) scale(1,1.080)" font-size="15.90" fill="#ececf0" letter-spacing="0.033" stroke="#ececf0" stroke-width="0.30">Wärmepumpen Starts</text>
<text transform="translate(2342.19,198.44) scale(1,1.080)" font-size="15.90" fill="#ececf0" letter-spacing="0.194" text-anchor="end" stroke="#ececf0" stroke-width="0.30">0</text>
<text transform="translate(1763.60,237.67) scale(1,1.080)" font-size="15.90" fill="#ececf0" letter-spacing="0.160" stroke="#ececf0" stroke-width="0.30">Betriebszeit</text>
<text transform="translate(2342.19,237.67) scale(1,1.080)" font-size="15.90" fill="#ececf0" letter-spacing="0.194" text-anchor="end" stroke="#ececf0" stroke-width="0.30">0</text>
<text transform="translate(1763.60,276.90) scale(1,1.080)" font-size="15.90" fill="#ececf0" letter-spacing="0.085" stroke="#ececf0" stroke-width="0.30">Heizen Zieltemperatur</text>
<text transform="translate(2342.19,276.90) scale(1,1.080)" font-size="15.90" fill="#ececf0" letter-spacing="0.194" text-anchor="end" stroke="#ececf0" stroke-width="0.30">0</text>
<text transform="translate(1763.60,316.13) scale(1,1.080)" font-size="15.90" fill="#ececf0" stroke="#ececf0" stroke-width="0.30">WW Zieltemperatur</text>
<text transform="translate(2342.19,316.13) scale(1,1.080)" font-size="15.90" fill="#ececf0" letter-spacing="0.194" text-anchor="end" stroke="#ececf0" stroke-width="0.30">0</text>
<text transform="translate(1763.60,355.36) scale(1,1.080)" font-size="15.90" fill="#ececf0" letter-spacing="0.109" stroke="#ececf0" stroke-width="0.30">Sommer Temperatur</text>
<text transform="translate(2342.19,355.36) scale(1,1.080)" font-size="15.90" fill="#ececf0" letter-spacing="0.194" text-anchor="end" stroke="#ececf0" stroke-width="0.30">0</text>
<text transform="translate(1763.60,394.59) scale(1,1.080)" font-size="15.90" fill="#ececf0" letter-spacing="0.104" stroke="#ececf0" stroke-width="0.30">Legionellen Temperatur</text>
<text transform="translate(2342.19,394.59) scale(1,1.080)" font-size="15.90" fill="#ececf0" letter-spacing="0.194" text-anchor="end" stroke="#ececf0" stroke-width="0.30">0</text>
<text transform="translate(1763.60,433.82) scale(1,1.080)" font-size="15.90" fill="#ececf0" letter-spacing="0.034" stroke="#ececf0" stroke-width="0.30">Letzte Fehlermeldung</text>
<text transform="translate(2385.70,103.80) scale(1,1.020)" font-size="22.70" fill="#ffffff" letter-spacing="-0.030">Status Wärmepumpe</text>
<text x="2975.72" y="103.60" font-size="22.20" fill="#ffffff" letter-spacing="-1.084" text-anchor="end" font-weight="bold">Aus</text>
<text transform="translate(2385.50,166.80) scale(1,1.060)" font-size="18.40" fill="#ffffff" letter-spacing="0.042">Wärmepumpenmodus</text>
<text x="2976.39" y="166.80" font-size="18.00" fill="#ffffff" letter-spacing="-0.410" text-anchor="end" font-weight="bold">Nur Heizen</text>
<text transform="translate(2385.50,209.57) scale(1,1.060)" font-size="18.40" fill="#ffffff" letter-spacing="-0.106">Interner Heizstab WP</text>
<text x="2975.92" y="209.57" font-size="18.00" fill="#ffffff" letter-spacing="-0.879" text-anchor="end" font-weight="bold">Aus</text>
<text transform="translate(2385.50,252.34) scale(1,1.060)" font-size="18.40" fill="#ffffff" letter-spacing="-0.211">Externer Heizstab WW</text>
<text x="2975.92" y="252.34" font-size="18.00" fill="#ffffff" letter-spacing="-0.879" text-anchor="end" font-weight="bold">Aus</text>
<text transform="translate(2385.50,295.11) scale(1,1.060)" font-size="18.40" fill="#ffffff" letter-spacing="-0.173">Quiet Mode Level</text>
<text x="2977.12" y="295.11" font-size="18.00" fill="#ffffff" letter-spacing="0.316" text-anchor="end" font-weight="bold">0</text>
<text transform="translate(2385.50,337.88) scale(1,1.060)" font-size="18.40" fill="#ffffff" letter-spacing="0.070">Verdichter Abtauen</text>
<text x="2975.92" y="337.88" font-size="18.00" fill="#ffffff" letter-spacing="-0.879" text-anchor="end" font-weight="bold">Aus</text>
<text transform="translate(2385.50,380.65) scale(1,1.060)" font-size="18.40" fill="#ffffff" letter-spacing="0.063">Legionellenschaltung</text>
<text x="2975.92" y="380.65" font-size="18.00" fill="#ffffff" letter-spacing="-0.879" text-anchor="end" font-weight="bold">Aus</text>
<text transform="translate(2385.50,423.42) scale(1,1.060)" font-size="18.40" fill="#ffffff" letter-spacing="-0.058">Heizstab WP aktiv für Heizen</text>
<text x="2975.92" y="423.42" font-size="18.00" fill="#ffffff" letter-spacing="-0.879" text-anchor="end" font-weight="bold">Aus</text>
<text transform="translate(2385.50,466.19) scale(1,1.060)" font-size="18.40" fill="#ffffff" letter-spacing="-0.112">Heizstab WP aktiv für WW</text>
<text x="2975.92" y="466.19" font-size="18.00" fill="#ffffff" letter-spacing="-0.879" text-anchor="end" font-weight="bold">Aus</text>
<text transform="translate(758.45,510.00) scale(1,1.100)" font-size="15.68" fill="#ccccdc" letter-spacing="0.105" text-anchor="middle" stroke="#ccccdc" stroke-width="0.44">Temperaturen</text>
<rect x="85.50" y="550.77" width="1375.25" height="1.25" fill="rgba(225,232,245,0.088)"/>
<text transform="translate(79.31,554.65) scale(1,1.040)" font-size="13.20" fill="#ccccdc" letter-spacing="-0.195" text-anchor="end">60.00 °C</text>
<rect x="85.50" y="592.06" width="1375.25" height="1.25" fill="rgba(225,232,245,0.088)"/>
<text transform="translate(79.31,595.94) scale(1,1.040)" font-size="13.20" fill="#ccccdc" letter-spacing="-0.195" text-anchor="end">50.00 °C</text>
<rect x="85.50" y="633.36" width="1375.25" height="1.25" fill="rgba(225,232,245,0.088)"/>
<text transform="translate(79.31,637.23) scale(1,1.040)" font-size="13.20" fill="#ccccdc" letter-spacing="-0.195" text-anchor="end">40.00 °C</text>
<rect x="85.50" y="674.64" width="1375.25" height="1.25" fill="rgba(225,232,245,0.088)"/>
<text transform="translate(79.31,678.52) scale(1,1.040)" font-size="13.20" fill="#ccccdc" letter-spacing="-0.195" text-anchor="end">30.00 °C</text>
<rect x="85.50" y="715.93" width="1375.25" height="1.25" fill="rgba(225,232,245,0.088)"/>
<text transform="translate(79.31,719.81) scale(1,1.040)" font-size="13.20" fill="#ccccdc" letter-spacing="-0.195" text-anchor="end">20.00 °C</text>
<rect x="85.50" y="757.23" width="1375.25" height="1.25" fill="rgba(225,232,245,0.088)"/>
<text transform="translate(79.31,761.10) scale(1,1.040)" font-size="13.20" fill="#ccccdc" letter-spacing="-0.195" text-anchor="end">10.00 °C</text>
<rect x="85.50" y="798.51" width="1375.25" height="1.25" fill="rgba(225,232,245,0.088)"/>
<text transform="translate(79.10,802.39) scale(1,1.040)" font-size="13.20" fill="#ccccdc" letter-spacing="-0.401" text-anchor="end">0 °C</text>
<rect x="137.32" y="551.25" width="1.25" height="251.25" fill="rgba(225,232,245,0.088)"/>
<text transform="translate(137.82,818.50) scale(1,1.040)" font-size="13.20" fill="#ccccdc" letter-spacing="0.139" text-anchor="middle">03/13 12:00</text>
<rect x="251.57" y="551.25" width="1.25" height="251.25" fill="rgba(225,232,245,0.088)"/>
<text transform="translate(252.07,818.50) scale(1,1.040)" font-size="13.20" fill="#ccccdc" letter-spacing="0.139" text-anchor="middle">03/13 16:00</text>
<rect x="365.82" y="551.25" width="1.25" height="251.25" fill="rgba(225,232,245,0.088)"/>
<text transform="translate(366.32,818.50) scale(1,1.040)" font-size="13.20" fill="#ccccdc" letter-spacing="0.139" text-anchor="middle">03/13 20:00</text>
<rect x="480.07" y="551.25" width="1.25" height="251.25" fill="rgba(225,232,245,0.088)"/>
<text transform="translate(480.57,818.50) scale(1,1.040)" font-size="13.20" fill="#ccccdc" letter-spacing="0.139" text-anchor="middle">03/14 00:00</text>
<rect x="594.33" y="551.25" width="1.25" height="251.25" fill="rgba(225,232,245,0.088)"/>
<text transform="translate(594.82,818.50) scale(1,1.040)" font-size="13.20" fill="#ccccdc" letter-spacing="0.139" text-anchor="middle">03/14 04:00</text>
<rect x="708.58" y="551.25" width="1.25" height="251.25" fill="rgba(225,232,245,0.088)"/>
<text transform="translate(709.07,818.50) scale(1,1.040)" font-size="13.20" fill="#ccccdc" letter-spacing="0.139" text-anchor="middle">03/14 08:00</text>
<rect x="822.83" y="551.25" width="1.25" height="251.25" fill="rgba(225,232,245,0.088)"/>
<text transform="translate(823.32,818.50) scale(1,1.040)" font-size="13.20" fill="#ccccdc" letter-spacing="0.139" text-anchor="middle">03/14 12:00</text>
<rect x="937.08" y="551.25" width="1.25" height="251.25" fill="rgba(225,232,245,0.088)"/>
<text transform="translate(937.57,818.50) scale(1,1.040)" font-size="13.20" fill="#ccccdc" letter-spacing="0.139" text-anchor="middle">03/14 16:00</text>
<rect x="1051.33" y="551.25" width="1.25" height="251.25" fill="rgba(225,232,245,0.088)"/>
<text transform="translate(1051.82,818.50) scale(1,1.040)" font-size="13.20" fill="#ccccdc" letter-spacing="0.139" text-anchor="middle">03/14 20:00</text>
<rect x="1165.58" y="551.25" width="1.25" height="251.25" fill="rgba(225,232,245,0.088)"/>
<text transform="translate(1166.07,818.50) scale(1,1.040)" font-size="13.20" fill="#ccccdc" letter-spacing="0.139" text-anchor="middle">03/15 00:00</text>
<rect x="1279.83" y="551.25" width="1.25" height="251.25" fill="rgba(225,232,245,0.088)"/>
<text transform="translate(1280.32,818.50) scale(1,1.040)" font-size="13.20" fill="#ccccdc" letter-spacing="0.139" text-anchor="middle">03/15 04:00</text>
<rect x="1394.08" y="551.25" width="1.25" height="251.25" fill="rgba(225,232,245,0.088)"/>
<text transform="translate(1394.57,818.50) scale(1,1.040)" font-size="13.20" fill="#ccccdc" letter-spacing="0.139" text-anchor="middle">03/15 08:00</text>
<rect x="174" y="797" width="4.5" height="2.5" fill="#f2495c"/>
<text transform="translate(1330.00,839.10) scale(1,1.030)" font-size="13.50" fill="#6e9fff" letter-spacing="0.326" stroke="#6e9fff" stroke-width="0.38">Last *</text>
<text transform="translate(1393.25,839.10) scale(1,1.030)" font-size="13.50" fill="#6e9fff" letter-spacing="0.568" stroke="#6e9fff" stroke-width="0.38">Min</text>
<text transform="translate(1443.75,839.10) scale(1,1.030)" font-size="13.50" fill="#6e9fff" letter-spacing="0.397" stroke="#6e9fff" stroke-width="0.38">Max</text>
<rect x="28.00" y="847.02" width="1460.00" height="1.25" fill="rgba(204,204,220,0.075)"/>
<rect x="28.00" y="872.77" width="1460.00" height="1.25" fill="rgba(204,204,220,0.075)"/>
<rect x="28.00" y="898.52" width="1460.00" height="1.25" fill="rgba(204,204,220,0.075)"/>
<rect x="28.00" y="924.27" width="1460.00" height="1.25" fill="rgba(204,204,220,0.075)"/>
<rect x="28.00" y="950.02" width="1460.00" height="1.25" fill="rgba(204,204,220,0.075)"/>
<rect x="28.00" y="975.77" width="1460.00" height="1.25" fill="rgba(204,204,220,0.075)"/>
<rect x="37.00" y="858.35" width="15.6" height="4.5" rx="1" fill="#73bf69"/>
<text transform="translate(61.75,864.35) scale(1,1.030)" font-size="13.50" fill="#ccccdc" letter-spacing="0.244" stroke="#ccccdc" stroke-width="0.30">Rücklauftemperatur</text>
<text transform="translate(1330.00,864.35) scale(1,1.030)" font-size="13.50" fill="#ccccdc" letter-spacing="-0.227">0 °C</text>
<text transform="translate(1393.25,864.35) scale(1,1.030)" font-size="13.50" fill="#ccccdc" letter-spacing="-0.227">0 °C</text>
<text transform="translate(1443.75,864.35) scale(1,1.030)" font-size="13.50" fill="#ccccdc" letter-spacing="-0.227">0 °C</text>
<rect x="37.00" y="884.10" width="15.6" height="4.5" rx="1" fill="#f2cc0c"/>
<text transform="translate(61.75,890.10) scale(1,1.030)" font-size="13.50" fill="#ccccdc" letter-spacing="0.324" stroke="#ccccdc" stroke-width="0.30">Vorlauftemperatur</text>
<text transform="translate(1330.00,890.10) scale(1,1.030)" font-size="13.50" fill="#ccccdc" letter-spacing="-0.227">0 °C</text>
<text transform="translate(1393.25,890.10) scale(1,1.030)" font-size="13.50" fill="#ccccdc" letter-spacing="-0.227">0 °C</text>
<text transform="translate(1443.75,890.10) scale(1,1.030)" font-size="13.50" fill="#ccccdc" letter-spacing="-0.227">0 °C</text>
<rect x="37.00" y="909.85" width="15.6" height="4.5" rx="1" fill="#8ab8ff"/>
<text transform="translate(61.75,915.85) scale(1,1.030)" font-size="13.50" fill="#ccccdc" letter-spacing="0.259" stroke="#ccccdc" stroke-width="0.30">Zieltemperatur</text>
<text transform="translate(1330.00,915.85) scale(1,1.030)" font-size="13.50" fill="#ccccdc" letter-spacing="-0.227">0 °C</text>
<text transform="translate(1393.25,915.85) scale(1,1.030)" font-size="13.50" fill="#ccccdc" letter-spacing="-0.227">0 °C</text>
<text transform="translate(1443.75,915.85) scale(1,1.030)" font-size="13.50" fill="#ccccdc" letter-spacing="-0.227">0 °C</text>
<rect x="37.00" y="935.60" width="15.6" height="4.5" rx="1" fill="#ff780a"/>
<text transform="translate(61.75,941.60) scale(1,1.030)" font-size="13.50" fill="#ccccdc" letter-spacing="0.257" stroke="#ccccdc" stroke-width="0.30">Wassertemperatur</text>
<text transform="translate(1330.00,941.60) scale(1,1.030)" font-size="13.50" fill="#ccccdc" letter-spacing="-0.227">0 °C</text>
<text transform="translate(1393.25,941.60) scale(1,1.030)" font-size="13.50" fill="#ccccdc" letter-spacing="-0.227">0 °C</text>
<text transform="translate(1443.75,941.60) scale(1,1.030)" font-size="13.50" fill="#ccccdc" letter-spacing="-0.227">0 °C</text>
<rect x="37.00" y="961.35" width="15.6" height="4.5" rx="1" fill="#f2495c"/>
<text transform="translate(61.75,967.35) scale(1,1.030)" font-size="13.50" fill="#ccccdc" letter-spacing="0.247" stroke="#ccccdc" stroke-width="0.30">Aussentemperatur</text>
<text transform="translate(1330.00,967.35) scale(1,1.030)" font-size="13.50" fill="#ccccdc" letter-spacing="-0.227">0 °C</text>
<text transform="translate(1393.25,967.35) scale(1,1.030)" font-size="13.50" fill="#ccccdc" letter-spacing="-0.227">0 °C</text>
<text transform="translate(1443.75,967.35) scale(1,1.030)" font-size="13.50" fill="#ccccdc" letter-spacing="-0.227">0 °C</text>
<text transform="translate(2247.99,510.00) scale(1,1.100)" font-size="15.68" fill="#ccccdc" letter-spacing="-0.026" text-anchor="middle" stroke="#ccccdc" stroke-width="0.44">Wärmemengenzähler</text>
<rect x="1580.50" y="550.77" width="1370.50" height="1.25" fill="rgba(225,232,245,0.088)"/>
<text transform="translate(1574.13,554.65) scale(1,1.040)" font-size="13.20" fill="#ccccdc" letter-spacing="-0.118" text-anchor="end">100.00 W</text>
<rect x="1580.50" y="615.82" width="1370.50" height="1.25" fill="rgba(225,232,245,0.088)"/>
<text transform="translate(1574.10,619.70) scale(1,1.040)" font-size="13.20" fill="#ccccdc" letter-spacing="-0.145" text-anchor="end">80.00 W</text>
<rect x="1580.50" y="680.88" width="1370.50" height="1.25" fill="rgba(225,232,245,0.088)"/>
<text transform="translate(1574.10,684.75) scale(1,1.040)" font-size="13.20" fill="#ccccdc" letter-spacing="-0.145" text-anchor="end">60.00 W</text>
<rect x="1580.50" y="745.92" width="1370.50" height="1.25" fill="rgba(225,232,245,0.088)"/>
<text transform="translate(1574.10,749.80) scale(1,1.040)" font-size="13.20" fill="#ccccdc" letter-spacing="-0.145" text-anchor="end">40.00 W</text>
<rect x="1580.50" y="810.98" width="1370.50" height="1.25" fill="rgba(225,232,245,0.088)"/>
<text transform="translate(1574.10,814.85) scale(1,1.040)" font-size="13.20" fill="#ccccdc" letter-spacing="-0.145" text-anchor="end">20.00 W</text>
<rect x="1580.50" y="876.02" width="1370.50" height="1.25" fill="rgba(225,232,245,0.088)"/>
<text transform="translate(1573.90,879.90) scale(1,1.040)" font-size="13.20" fill="#ccccdc" letter-spacing="-0.354" text-anchor="end">0 W</text>
<rect x="1632.33" y="551.25" width="1.25" height="328.75" fill="rgba(225,232,245,0.088)"/>
<text transform="translate(1632.82,897.20) scale(1,1.040)" font-size="13.20" fill="#ccccdc" letter-spacing="0.139" text-anchor="middle">03/13 12:00</text>
<rect x="1746.12" y="551.25" width="1.25" height="328.75" fill="rgba(225,232,245,0.088)"/>
<text transform="translate(1746.62,897.20) scale(1,1.040)" font-size="13.20" fill="#ccccdc" letter-spacing="0.139" text-anchor="middle">03/13 16:00</text>
<rect x="1859.92" y="551.25" width="1.25" height="328.75" fill="rgba(225,232,245,0.088)"/>
<text transform="translate(1860.42,897.20) scale(1,1.040)" font-size="13.20" fill="#ccccdc" letter-spacing="0.139" text-anchor="middle">03/13 20:00</text>
<rect x="1973.73" y="551.25" width="1.25" height="328.75" fill="rgba(225,232,245,0.088)"/>
<text transform="translate(1974.22,897.20) scale(1,1.040)" font-size="13.20" fill="#ccccdc" letter-spacing="0.139" text-anchor="middle">03/14 00:00</text>
<rect x="2087.52" y="551.25" width="1.25" height="328.75" fill="rgba(225,232,245,0.088)"/>
<text transform="translate(2088.02,897.20) scale(1,1.040)" font-size="13.20" fill="#ccccdc" letter-spacing="0.139" text-anchor="middle">03/14 04:00</text>
<rect x="2201.32" y="551.25" width="1.25" height="328.75" fill="rgba(225,232,245,0.088)"/>
<text transform="translate(2201.82,897.20) scale(1,1.040)" font-size="13.20" fill="#ccccdc" letter-spacing="0.139" text-anchor="middle">03/14 08:00</text>
<rect x="2315.12" y="551.25" width="1.25" height="328.75" fill="rgba(225,232,245,0.088)"/>
<text transform="translate(2315.62,897.20) scale(1,1.040)" font-size="13.20" fill="#ccccdc" letter-spacing="0.139" text-anchor="middle">03/14 12:00</text>
<rect x="2428.92" y="551.25" width="1.25" height="328.75" fill="rgba(225,232,245,0.088)"/>
<text transform="translate(2429.42,897.20) scale(1,1.040)" font-size="13.20" fill="#ccccdc" letter-spacing="0.139" text-anchor="middle">03/14 16:00</text>
<rect x="2542.72" y="551.25" width="1.25" height="328.75" fill="rgba(225,232,245,0.088)"/>
<text transform="translate(2543.22,897.20) scale(1,1.040)" font-size="13.20" fill="#ccccdc" letter-spacing="0.139" text-anchor="middle">03/14 20:00</text>
<rect x="2656.52" y="551.25" width="1.25" height="328.75" fill="rgba(225,232,245,0.088)"/>
<text transform="translate(2657.02,897.20) scale(1,1.040)" font-size="13.20" fill="#ccccdc" letter-spacing="0.139" text-anchor="middle">03/15 00:00</text>
<rect x="2770.32" y="551.25" width="1.25" height="328.75" fill="rgba(225,232,245,0.088)"/>
<text transform="translate(2770.82,897.20) scale(1,1.040)" font-size="13.20" fill="#ccccdc" letter-spacing="0.139" text-anchor="middle">03/15 04:00</text>
<rect x="2884.12" y="551.25" width="1.25" height="328.75" fill="rgba(225,232,245,0.088)"/>
<text transform="translate(2884.62,897.20) scale(1,1.040)" font-size="13.20" fill="#ccccdc" letter-spacing="0.139" text-anchor="middle">03/15 08:00</text>
<rect x="1668.25" y="875" width="4.5" height="2.5" fill="#f2cc0c"/>
<text transform="translate(2819.75,916.60) scale(1,1.030)" font-size="13.50" fill="#6e9fff" letter-spacing="0.326" stroke="#6e9fff" stroke-width="0.38">Last *</text>
<text transform="translate(2883.00,916.60) scale(1,1.030)" font-size="13.50" fill="#6e9fff" letter-spacing="0.568" stroke="#6e9fff" stroke-width="0.38">Min</text>
<text transform="translate(2933.00,916.60) scale(1,1.030)" font-size="13.50" fill="#6e9fff" letter-spacing="0.397" stroke="#6e9fff" stroke-width="0.38">Max</text>
<rect x="1517.00" y="925.02" width="1460.00" height="1.25" fill="rgba(204,204,220,0.075)"/>
<rect x="1517.00" y="950.27" width="1460.00" height="1.25" fill="rgba(204,204,220,0.075)"/>
<rect x="1517.00" y="975.77" width="1460.00" height="1.25" fill="rgba(204,204,220,0.075)"/>
<rect x="1526.75" y="936.35" width="15.6" height="4.5" rx="1" fill="#73bf69"/>
<text transform="translate(1551.25,942.35) scale(1,1.030)" font-size="13.50" fill="#ccccdc" letter-spacing="0.151" stroke="#ccccdc" stroke-width="0.30">Produktion Wärmeenergie</text>
<text transform="translate(2819.75,942.35) scale(1,1.030)" font-size="13.50" fill="#ccccdc" letter-spacing="-0.136">0 W</text>
<text transform="translate(2883.00,942.35) scale(1,1.030)" font-size="13.50" fill="#ccccdc" letter-spacing="-0.136">0 W</text>
<text transform="translate(2933.00,942.35) scale(1,1.030)" font-size="13.50" fill="#ccccdc" letter-spacing="-0.136">0 W</text>
<rect x="1526.75" y="961.60" width="15.6" height="4.5" rx="1" fill="#f2cc0c"/>
<text transform="translate(1551.25,967.60) scale(1,1.030)" font-size="13.50" fill="#ccccdc" letter-spacing="0.098" stroke="#ccccdc" stroke-width="0.30">Verbrauch Wärmeenergie</text>
<text transform="translate(2819.75,967.60) scale(1,1.030)" font-size="13.50" fill="#ccccdc" letter-spacing="-0.136">0 W</text>
<text transform="translate(2883.00,967.60) scale(1,1.030)" font-size="13.50" fill="#ccccdc" letter-spacing="-0.136">0 W</text>
<text transform="translate(2933.00,967.60) scale(1,1.030)" font-size="13.50" fill="#ccccdc" letter-spacing="-0.136">0 W</text>
<rect x="2977.0" y="976.75" width="2.2" height="1.1" fill="#dcdcdc"/>
<text transform="translate(758.44,1022.00) scale(1,1.100)" font-size="15.68" fill="#ccccdc" letter-spacing="0.087" text-anchor="middle" stroke="#ccccdc" stroke-width="0.44">Frequenz / Pumpe / Lüfter</text>
<rect x="186.50" y="1062.28" width="1227.25" height="1.25" fill="rgba(225,232,245,0.088)"/>
<rect x="114.50" y="1062.28" width="4.25" height="1.25" fill="rgba(225,232,245,0.088)"/>
<text transform="translate(108.93,1066.15) scale(1,1.040)" font-size="13.20" fill="#ccccdc" letter-spacing="0.180" text-anchor="end">100.00 L/min</text>
<text transform="translate(179.96,1066.15) scale(1,1.040)" font-size="13.20" fill="#ccccdc" letter-spacing="-0.040" text-anchor="end">100.00 Hz</text>
<text transform="translate(1419.25,1066.15) scale(1,1.040)" font-size="13.20" fill="#ccccdc" letter-spacing="0.054">100.00 rpm</text>
<rect x="186.50" y="1111.95" width="1227.25" height="1.25" fill="rgba(225,232,245,0.088)"/>
<rect x="114.50" y="1111.95" width="4.25" height="1.25" fill="rgba(225,232,245,0.088)"/>
<text transform="translate(108.94,1115.82) scale(1,1.040)" font-size="13.20" fill="#ccccdc" letter-spacing="0.189" text-anchor="end">80.00 L/min</text>
<text transform="translate(179.95,1115.82) scale(1,1.040)" font-size="13.20" fill="#ccccdc" letter-spacing="-0.055" text-anchor="end">80.00 Hz</text>
<text transform="translate(1419.25,1115.82) scale(1,1.040)" font-size="13.20" fill="#ccccdc" letter-spacing="0.051">80.00 rpm</text>
<rect x="186.50" y="1161.62" width="1227.25" height="1.25" fill="rgba(225,232,245,0.088)"/>
<rect x="114.50" y="1161.62" width="4.25" height="1.25" fill="rgba(225,232,245,0.088)"/>
<text transform="translate(108.94,1165.49) scale(1,1.040)" font-size="13.20" fill="#ccccdc" letter-spacing="0.189" text-anchor="end">60.00 L/min</text>
<text transform="translate(179.95,1165.49) scale(1,1.040)" font-size="13.20" fill="#ccccdc" letter-spacing="-0.055" text-anchor="end">60.00 Hz</text>
<text transform="translate(1419.25,1165.49) scale(1,1.040)" font-size="13.20" fill="#ccccdc" letter-spacing="0.051">60.00 rpm</text>
<rect x="186.50" y="1211.29" width="1227.25" height="1.25" fill="rgba(225,232,245,0.088)"/>
<rect x="114.50" y="1211.29" width="4.25" height="1.25" fill="rgba(225,232,245,0.088)"/>
<text transform="translate(108.94,1215.16) scale(1,1.040)" font-size="13.20" fill="#ccccdc" letter-spacing="0.189" text-anchor="end">40.00 L/min</text>
<text transform="translate(179.95,1215.16) scale(1,1.040)" font-size="13.20" fill="#ccccdc" letter-spacing="-0.055" text-anchor="end">40.00 Hz</text>
<text transform="translate(1419.25,1215.16) scale(1,1.040)" font-size="13.20" fill="#ccccdc" letter-spacing="0.051">40.00 rpm</text>
<rect x="186.50" y="1260.96" width="1227.25" height="1.25" fill="rgba(225,232,245,0.088)"/>
<rect x="114.50" y="1260.96" width="4.25" height="1.25" fill="rgba(225,232,245,0.088)"/>
<text transform="translate(108.94,1264.83) scale(1,1.040)" font-size="13.20" fill="#ccccdc" letter-spacing="0.189" text-anchor="end">20.00 L/min</text>
<text transform="translate(179.95,1264.83) scale(1,1.040)" font-size="13.20" fill="#ccccdc" letter-spacing="-0.055" text-anchor="end">20.00 Hz</text>
<text transform="translate(1419.25,1264.83) scale(1,1.040)" font-size="13.20" fill="#ccccdc" letter-spacing="0.051">20.00 rpm</text>
<rect x="186.50" y="1310.62" width="1227.25" height="1.25" fill="rgba(225,232,245,0.088)"/>
<rect x="114.50" y="1310.62" width="4.25" height="1.25" fill="rgba(225,232,245,0.088)"/>
<text transform="translate(109.04,1314.50) scale(1,1.040)" font-size="13.20" fill="#ccccdc" letter-spacing="0.291" text-anchor="end">0 L/min</text>
<text transform="translate(179.88,1314.50) scale(1,1.040)" font-size="13.20" fill="#ccccdc" letter-spacing="-0.121" text-anchor="end">0 Hz</text>
<text transform="translate(1419.25,1314.50) scale(1,1.040)" font-size="13.20" fill="#ccccdc" letter-spacing="0.082">0 rpm</text>
<rect x="233.07" y="1062.75" width="1.25" height="252.25" fill="rgba(225,232,245,0.088)"/>
<text transform="translate(233.57,1331.20) scale(1,1.040)" font-size="13.20" fill="#ccccdc" letter-spacing="0.139" text-anchor="middle">03/13 12:00</text>
<rect x="334.62" y="1062.75" width="1.25" height="252.25" fill="rgba(225,232,245,0.088)"/>
<text transform="translate(335.11,1331.20) scale(1,1.040)" font-size="13.20" fill="#ccccdc" letter-spacing="0.139" text-anchor="middle">03/13 16:00</text>
<rect x="436.17" y="1062.75" width="1.25" height="252.25" fill="rgba(225,232,245,0.088)"/>
<text transform="translate(436.66,1331.20) scale(1,1.040)" font-size="13.20" fill="#ccccdc" letter-spacing="0.139" text-anchor="middle">03/13 20:00</text>
<rect x="537.71" y="1062.75" width="1.25" height="252.25" fill="rgba(225,232,245,0.088)"/>
<text transform="translate(538.20,1331.20) scale(1,1.040)" font-size="13.20" fill="#ccccdc" letter-spacing="0.139" text-anchor="middle">03/14 00:00</text>
<rect x="639.26" y="1062.75" width="1.25" height="252.25" fill="rgba(225,232,245,0.088)"/>
<text transform="translate(639.75,1331.20) scale(1,1.040)" font-size="13.20" fill="#ccccdc" letter-spacing="0.139" text-anchor="middle">03/14 04:00</text>
<rect x="740.80" y="1062.75" width="1.25" height="252.25" fill="rgba(225,232,245,0.088)"/>
<text transform="translate(741.29,1331.20) scale(1,1.040)" font-size="13.20" fill="#ccccdc" letter-spacing="0.139" text-anchor="middle">03/14 08:00</text>
<rect x="842.35" y="1062.75" width="1.25" height="252.25" fill="rgba(225,232,245,0.088)"/>
<text transform="translate(842.84,1331.20) scale(1,1.040)" font-size="13.20" fill="#ccccdc" letter-spacing="0.139" text-anchor="middle">03/14 12:00</text>
<rect x="943.89" y="1062.75" width="1.25" height="252.25" fill="rgba(225,232,245,0.088)"/>
<text transform="translate(944.38,1331.20) scale(1,1.040)" font-size="13.20" fill="#ccccdc" letter-spacing="0.139" text-anchor="middle">03/14 16:00</text>
<rect x="1045.44" y="1062.75" width="1.25" height="252.25" fill="rgba(225,232,245,0.088)"/>
<text transform="translate(1045.93,1331.20) scale(1,1.040)" font-size="13.20" fill="#ccccdc" letter-spacing="0.139" text-anchor="middle">03/14 20:00</text>
<rect x="1146.98" y="1062.75" width="1.25" height="252.25" fill="rgba(225,232,245,0.088)"/>
<text transform="translate(1147.47,1331.20) scale(1,1.040)" font-size="13.20" fill="#ccccdc" letter-spacing="0.139" text-anchor="middle">03/15 00:00</text>
<rect x="1248.53" y="1062.75" width="1.25" height="252.25" fill="rgba(225,232,245,0.088)"/>
<text transform="translate(1249.02,1331.20) scale(1,1.040)" font-size="13.20" fill="#ccccdc" letter-spacing="0.139" text-anchor="middle">03/15 04:00</text>
<rect x="1350.07" y="1062.75" width="1.25" height="252.25" fill="rgba(225,232,245,0.088)"/>
<text transform="translate(1350.56,1331.20) scale(1,1.040)" font-size="13.20" fill="#ccccdc" letter-spacing="0.139" text-anchor="middle">03/15 08:00</text>
<rect x="265.75" y="1309.25" width="3.75" height="2.75" fill="#f2495c"/>
<text transform="translate(1300.75,1350.60) scale(1,1.030)" font-size="13.50" fill="#6e9fff" letter-spacing="0.326" stroke="#6e9fff" stroke-width="0.38">Last *</text>
<text transform="translate(1366.25,1350.60) scale(1,1.030)" font-size="13.50" fill="#6e9fff" letter-spacing="0.568" stroke="#6e9fff" stroke-width="0.38">Min</text>
<text transform="translate(1431.50,1350.60) scale(1,1.030)" font-size="13.50" fill="#6e9fff" letter-spacing="0.397" stroke="#6e9fff" stroke-width="0.38">Max</text>
<rect x="28.00" y="1359.28" width="1460.00" height="1.25" fill="rgba(204,204,220,0.075)"/>
<rect x="28.00" y="1385.03" width="1460.00" height="1.25" fill="rgba(204,204,220,0.075)"/>
<rect x="28.00" y="1410.78" width="1460.00" height="1.25" fill="rgba(204,204,220,0.075)"/>
<rect x="28.00" y="1436.53" width="1460.00" height="1.25" fill="rgba(204,204,220,0.075)"/>
<rect x="28.00" y="1462.28" width="1460.00" height="1.25" fill="rgba(204,204,220,0.075)"/>
<rect x="28.00" y="1488.03" width="1460.00" height="1.25" fill="rgba(204,204,220,0.075)"/>
<rect x="37.00" y="1370.60" width="15.6" height="4.5" rx="1" fill="#73bf69"/>
<text transform="translate(61.75,1376.60) scale(1,1.030)" font-size="13.50" fill="#ccccdc" letter-spacing="0.119" stroke="#ccccdc" stroke-width="0.30">Kompressor Frequenz</text>
<text transform="translate(1300.75,1376.60) scale(1,1.030)" font-size="13.50" fill="#ccccdc" letter-spacing="0.078">0 Hz</text>
<text transform="translate(1366.25,1376.60) scale(1,1.030)" font-size="13.50" fill="#ccccdc" letter-spacing="0.078">0 Hz</text>
<text transform="translate(1431.50,1376.60) scale(1,1.030)" font-size="13.50" fill="#ccccdc" letter-spacing="0.078">0 Hz</text>
<rect x="37.00" y="1396.35" width="15.6" height="4.5" rx="1" fill="#f2cc0c"/>
<text transform="translate(61.75,1402.35) scale(1,1.030)" font-size="13.50" fill="#ccccdc" letter-spacing="0.197" stroke="#ccccdc" stroke-width="0.30">Pumpe Durchfluss</text>
<text transform="translate(1300.75,1402.35) scale(1,1.030)" font-size="13.50" fill="#ccccdc" letter-spacing="0.494">0 L/min</text>
<text transform="translate(1366.25,1402.35) scale(1,1.030)" font-size="13.50" fill="#ccccdc" letter-spacing="0.494">0 L/min</text>
<text transform="translate(1431.50,1402.35) scale(1,1.030)" font-size="13.50" fill="#ccccdc" letter-spacing="0.494">0 L/min</text>
<rect x="37.00" y="1422.10" width="15.6" height="4.5" rx="1" fill="#8ab8ff"/>
<text transform="translate(61.75,1428.10) scale(1,1.030)" font-size="13.50" fill="#ccccdc" letter-spacing="0.029" stroke="#ccccdc" stroke-width="0.30">Pumpe Speed</text>
<text transform="translate(151.08,1428.10) scale(1,1.030)" font-size="13.50" fill="#9d9dac" letter-spacing="0.165">(right y-axis)</text>
<text transform="translate(1300.75,1428.10) scale(1,1.030)" font-size="13.50" fill="#ccccdc" letter-spacing="0.291">0 rpm</text>
<text transform="translate(1366.25,1428.10) scale(1,1.030)" font-size="13.50" fill="#ccccdc" letter-spacing="0.291">0 rpm</text>
<text transform="translate(1431.50,1428.10) scale(1,1.030)" font-size="13.50" fill="#ccccdc" letter-spacing="0.291">0 rpm</text>
<rect x="37.00" y="1447.85" width="15.6" height="4.5" rx="1" fill="#ff780a"/>
<text transform="translate(61.75,1453.85) scale(1,1.030)" font-size="13.50" fill="#ccccdc" letter-spacing="0.078" stroke="#ccccdc" stroke-width="0.30">Lüfter 1 Speed</text>
<text transform="translate(154.86,1453.85) scale(1,1.030)" font-size="13.50" fill="#9d9dac" letter-spacing="0.165">(right y-axis)</text>
<text transform="translate(1300.75,1453.85) scale(1,1.030)" font-size="13.50" fill="#ccccdc" letter-spacing="0.291">0 rpm</text>
<text transform="translate(1366.25,1453.85) scale(1,1.030)" font-size="13.50" fill="#ccccdc" letter-spacing="0.291">0 rpm</text>
<text transform="translate(1431.50,1453.85) scale(1,1.030)" font-size="13.50" fill="#ccccdc" letter-spacing="0.291">0 rpm</text>
<rect x="37.00" y="1473.60" width="15.6" height="4.5" rx="1" fill="#f2495c"/>
<text transform="translate(61.75,1479.60) scale(1,1.030)" font-size="13.50" fill="#ccccdc" letter-spacing="0.078" stroke="#ccccdc" stroke-width="0.30">Lüfter 2 Speed</text>
<text transform="translate(154.86,1479.60) scale(1,1.030)" font-size="13.50" fill="#9d9dac" letter-spacing="0.165">(right y-axis)</text>
<text transform="translate(1300.75,1479.60) scale(1,1.030)" font-size="13.50" fill="#ccccdc" letter-spacing="0.291">0 rpm</text>
<text transform="translate(1366.25,1479.60) scale(1,1.030)" font-size="13.50" fill="#ccccdc" letter-spacing="0.291">0 rpm</text>
<text transform="translate(1431.50,1479.60) scale(1,1.030)" font-size="13.50" fill="#ccccdc" letter-spacing="0.291">0 rpm</text>
<text transform="translate(2247.99,1022.00) scale(1,1.100)" font-size="15.68" fill="#ccccdc" letter-spacing="-0.018" text-anchor="middle" stroke="#ccccdc" stroke-width="0.44">Verbrauch Wärmepumpe</text>
<rect x="1569.25" y="1062.28" width="1326.75" height="1.25" fill="rgba(225,232,245,0.088)"/>
<text transform="translate(1562.82,1066.15) scale(1,1.040)" font-size="13.20" fill="#ccccdc" letter-spacing="-0.183" text-anchor="end">2.00 W</text>
<text transform="translate(2901.75,1066.15) scale(1,1.040)" font-size="13.20" fill="#ccccdc" letter-spacing="-0.183">2.00 W</text>
<rect x="1569.25" y="1120.78" width="1326.75" height="1.25" fill="rgba(225,232,245,0.088)"/>
<text transform="translate(1562.82,1124.65) scale(1,1.040)" font-size="13.20" fill="#ccccdc" letter-spacing="-0.183" text-anchor="end">1.00 W</text>
<text transform="translate(2901.75,1124.65) scale(1,1.040)" font-size="13.20" fill="#ccccdc" letter-spacing="-0.183">1.00 W</text>
<rect x="1569.25" y="1181.03" width="1326.75" height="1.25" fill="rgba(225,232,245,0.088)"/>
<text transform="translate(1562.65,1184.90) scale(1,1.040)" font-size="13.20" fill="#ccccdc" letter-spacing="-0.354" text-anchor="end">0 W</text>
<text transform="translate(2901.75,1184.90) scale(1,1.040)" font-size="13.20" fill="#ccccdc" letter-spacing="-0.354">0 W</text>
<rect x="1569.25" y="1240.78" width="1326.75" height="1.25" fill="rgba(225,232,245,0.088)"/>
<text transform="translate(1562.74,1244.65) scale(1,1.040)" font-size="13.20" fill="#ccccdc" letter-spacing="-0.263" text-anchor="end">-1.00 W</text>
<text transform="translate(2901.75,1244.65) scale(1,1.040)" font-size="13.20" fill="#ccccdc" letter-spacing="-0.263">-1.00 W</text>
<rect x="1569.25" y="1300.78" width="1326.75" height="1.25" fill="rgba(225,232,245,0.088)"/>
<text transform="translate(1562.74,1304.65) scale(1,1.040)" font-size="13.20" fill="#ccccdc" letter-spacing="-0.263" text-anchor="end">-2.00 W</text>
<text transform="translate(2901.75,1304.65) scale(1,1.040)" font-size="13.20" fill="#ccccdc" letter-spacing="-0.263">-2.00 W</text>
<rect x="1619.08" y="1062.75" width="1.25" height="278.25" fill="rgba(225,232,245,0.088)"/>
<text transform="translate(1619.57,1357.20) scale(1,1.040)" font-size="13.20" fill="#ccccdc" letter-spacing="0.139" text-anchor="middle">03/13 12:00</text>
<rect x="1728.91" y="1062.75" width="1.25" height="278.25" fill="rgba(225,232,245,0.088)"/>
<text transform="translate(1729.41,1357.20) scale(1,1.040)" font-size="13.20" fill="#ccccdc" letter-spacing="0.139" text-anchor="middle">03/13 16:00</text>
<rect x="1838.76" y="1062.75" width="1.25" height="278.25" fill="rgba(225,232,245,0.088)"/>
<text transform="translate(1839.25,1357.20) scale(1,1.040)" font-size="13.20" fill="#ccccdc" letter-spacing="0.139" text-anchor="middle">03/13 20:00</text>
<rect x="1948.60" y="1062.75" width="1.25" height="278.25" fill="rgba(225,232,245,0.088)"/>
<text transform="translate(1949.09,1357.20) scale(1,1.040)" font-size="13.20" fill="#ccccdc" letter-spacing="0.139" text-anchor="middle">03/14 00:00</text>
<rect x="2058.43" y="1062.75" width="1.25" height="278.25" fill="rgba(225,232,245,0.088)"/>
<text transform="translate(2058.93,1357.20) scale(1,1.040)" font-size="13.20" fill="#ccccdc" letter-spacing="0.139" text-anchor="middle">03/14 04:00</text>
<rect x="2168.27" y="1062.75" width="1.25" height="278.25" fill="rgba(225,232,245,0.088)"/>
<text transform="translate(2168.77,1357.20) scale(1,1.040)" font-size="13.20" fill="#ccccdc" letter-spacing="0.139" text-anchor="middle">03/14 08:00</text>
<rect x="2278.11" y="1062.75" width="1.25" height="278.25" fill="rgba(225,232,245,0.088)"/>
<text transform="translate(2278.61,1357.20) scale(1,1.040)" font-size="13.20" fill="#ccccdc" letter-spacing="0.139" text-anchor="middle">03/14 12:00</text>
<rect x="2387.95" y="1062.75" width="1.25" height="278.25" fill="rgba(225,232,245,0.088)"/>
<text transform="translate(2388.45,1357.20) scale(1,1.040)" font-size="13.20" fill="#ccccdc" letter-spacing="0.139" text-anchor="middle">03/14 16:00</text>
<rect x="2497.80" y="1062.75" width="1.25" height="278.25" fill="rgba(225,232,245,0.088)"/>
<text transform="translate(2498.29,1357.20) scale(1,1.040)" font-size="13.20" fill="#ccccdc" letter-spacing="0.139" text-anchor="middle">03/14 20:00</text>
<rect x="2607.63" y="1062.75" width="1.25" height="278.25" fill="rgba(225,232,245,0.088)"/>
<text transform="translate(2608.13,1357.20) scale(1,1.040)" font-size="13.20" fill="#ccccdc" letter-spacing="0.139" text-anchor="middle">03/15 00:00</text>
<rect x="2717.47" y="1062.75" width="1.25" height="278.25" fill="rgba(225,232,245,0.088)"/>
<text transform="translate(2717.97,1357.20) scale(1,1.040)" font-size="13.20" fill="#ccccdc" letter-spacing="0.139" text-anchor="middle">03/15 04:00</text>
<rect x="2827.31" y="1062.75" width="1.25" height="278.25" fill="rgba(225,232,245,0.088)"/>
<text transform="translate(2827.81,1357.20) scale(1,1.040)" font-size="13.20" fill="#ccccdc" letter-spacing="0.139" text-anchor="middle">03/15 08:00</text>
<text transform="translate(2970.02,1198.75) rotate(90.00) scale(1,1.040)" font-size="13.20" fill="#ccccdc" letter-spacing="0.050" text-anchor="middle">Gesamtleistung</text>
<defs><pattern id="stripe" width="4" height="3.2" patternUnits="userSpaceOnUse" patternTransform="rotate(-8)"><rect width="4" height="3.2" fill="#8ab8ff"/><rect width="4" height="1.5" fill="#f58a3c"/></pattern><pattern id="zl" width="3" height="4" patternUnits="userSpaceOnUse"><rect width="3" height="4" fill="#e4a283"/><rect width="1.1" height="4" fill="#a6b4e0"/></pattern></defs>
<path d="M1634.2 1182.0L1634.4 1132.4L1636 1132L1639.6 1137L1640.6 1182.0Z" fill="#f7a707"/>
<path d="M2062.3 1182.0L2063.2 1240L2064.2 1305.5L2065.6 1308.6L2067.8 1311" fill="none" stroke="#e3481b" stroke-width="2.3" stroke-dasharray="1.2 0.8" stroke-linejoin="round"/>
<path d="M2071.9 1182.0L2071.2 1240L2070.4 1300L2069.4 1307.6L2067.8 1311" fill="none" stroke="#e3481b" stroke-width="2.3" stroke-dasharray="1.2 0.8" stroke-linejoin="round"/>
<path d="M2064.6 1306.5L2069.6 1304.5L2066.4 1309.6L2069.2 1308.2" fill="none" stroke="#ee5a1c" stroke-width="1.6"/>
<path d="M2287.3 1182.0L2288 1136L2289.6 1132.5L2290.6 1132L2291 1090L2292.2 1086.6L2293.4 1090L2294.4 1096L2295.4 1100L2296 1148L2297.2 1182.0Z" fill="#f5ab0a"/>
<path d="M2136.60 1182.00L2137.20 1226.20L2138.90 1232.20L2140.60 1226.20L2141.20 1182.00Z" fill="url(#stripe)"/>
<path d="M2430.70 1182.00L2431.30 1222.00L2433.00 1228.00L2434.70 1222.00L2435.30 1182.00Z" fill="url(#stripe)"/>
<path d="M2475.00 1182.00L2475.60 1229.20L2477.30 1235.20L2479.00 1229.20L2479.60 1182.00Z" fill="url(#stripe)"/>
<path d="M2791.20 1182.00L2791.80 1237.80L2793.50 1243.80L2795.20 1237.80L2795.80 1182.00Z" fill="url(#stripe)"/>
<path d="M2854.50 1182.00L2855.10 1222.00L2856.80 1228.00L2858.50 1222.00L2859.10 1182.00Z" fill="url(#stripe)"/>
<rect x="1634.2" y="1180.30" width="1256.3" height="2.7" fill="url(#zl)"/>
<rect x="2062.4" y="1180.50" width="7.6" height="2.4" fill="#82b1f5"/>
<text transform="translate(2798.50,1376.60) scale(1,1.030)" font-size="13.50" fill="#6e9fff" letter-spacing="0.326" stroke="#6e9fff" stroke-width="0.38">Last *</text>
<text transform="translate(2861.50,1376.60) scale(1,1.030)" font-size="13.50" fill="#6e9fff" letter-spacing="0.568" stroke="#6e9fff" stroke-width="0.38">Min</text>
<text transform="translate(2926.25,1376.60) scale(1,1.030)" font-size="13.50" fill="#6e9fff" letter-spacing="0.397" stroke="#6e9fff" stroke-width="0.38">Max</text>
<rect x="1517.00" y="1385.03" width="1460.00" height="1.25" fill="rgba(204,204,220,0.075)"/>
<rect x="1517.00" y="1410.78" width="1460.00" height="1.25" fill="rgba(204,204,220,0.075)"/>
<rect x="1517.00" y="1436.53" width="1460.00" height="1.25" fill="rgba(204,204,220,0.075)"/>
<rect x="1517.00" y="1462.28" width="1460.00" height="1.25" fill="rgba(204,204,220,0.075)"/>
<rect x="1517.00" y="1488.03" width="1460.00" height="1.25" fill="rgba(204,204,220,0.075)"/>
<rect x="1526.75" y="1396.35" width="15.6" height="4.5" rx="1" fill="#c4162a"/>
<text transform="translate(1551.25,1402.35) scale(1,1.030)" font-size="13.50" fill="#ccccdc" letter-spacing="0.036" stroke="#ccccdc" stroke-width="0.30">Phase 1</text>
<text transform="translate(2798.50,1402.35) scale(1,1.030)" font-size="13.50" fill="#ccccdc" letter-spacing="-0.136">0 W</text>
<text transform="translate(2861.50,1402.35) scale(1,1.030)" font-size="13.50" fill="#ccccdc" letter-spacing="-0.077">-2.18 W</text>
<text transform="translate(2926.25,1402.35) scale(1,1.030)" font-size="13.50" fill="#ccccdc" letter-spacing="-0.136">0 W</text>
<rect x="1526.75" y="1422.10" width="15.6" height="4.5" rx="1" fill="#f2cc0c"/>
<text transform="translate(1551.25,1428.10) scale(1,1.030)" font-size="13.50" fill="#ccccdc" letter-spacing="0.036" stroke="#ccccdc" stroke-width="0.30">Phase 2</text>
<text transform="translate(2798.50,1428.10) scale(1,1.030)" font-size="13.50" fill="#ccccdc" letter-spacing="-0.136">0 W</text>
<text transform="translate(2861.50,1428.10) scale(1,1.030)" font-size="13.50" fill="#ccccdc" letter-spacing="-0.136">0 W</text>
<text transform="translate(2926.25,1428.10) scale(1,1.030)" font-size="13.50" fill="#ccccdc" letter-spacing="0.019">1.58 W</text>
<rect x="1526.75" y="1447.85" width="15.6" height="4.5" rx="1" fill="#8ab8ff"/>
<text transform="translate(1551.25,1453.85) scale(1,1.030)" font-size="13.50" fill="#ccccdc" letter-spacing="0.036" stroke="#ccccdc" stroke-width="0.30">Phase 3</text>
<text transform="translate(2798.50,1453.85) scale(1,1.030)" font-size="13.50" fill="#ccccdc" letter-spacing="-0.136">0 W</text>
<text transform="translate(2861.50,1453.85) scale(1,1.030)" font-size="13.50" fill="#ccccdc" letter-spacing="-0.077">-1.03 W</text>
<text transform="translate(2926.25,1453.85) scale(1,1.030)" font-size="13.50" fill="#ccccdc" letter-spacing="-0.136">0 W</text>
<rect x="1526.75" y="1473.60" width="15.6" height="4.5" rx="1" fill="#ff780a"/>
<text transform="translate(1551.25,1479.60) scale(1,1.030)" font-size="13.50" fill="#ccccdc" letter-spacing="0.251" stroke="#ccccdc" stroke-width="0.30">Gesamtleistung</text>
<text transform="translate(1652.01,1479.60) scale(1,1.030)" font-size="13.50" fill="#9d9dac" letter-spacing="0.165">(right y-axis)</text>
<text transform="translate(2798.50,1479.60) scale(1,1.030)" font-size="13.50" fill="#ccccdc" letter-spacing="-0.136">0 W</text>
<text transform="translate(2861.50,1479.60) scale(1,1.030)" font-size="13.50" fill="#ccccdc" letter-spacing="-0.077">-2.18 W</text>
<text transform="translate(2926.25,1479.60) scale(1,1.030)" font-size="13.50" fill="#ccccdc" letter-spacing="0.019">1.58 W</text>
<rect x="2977.0" y="1489.0" width="2.2" height="1.1" fill="#dcdcdc"/>
</svg>
<div id="menu" style="left:0;top:0;width:3000px;height:1516px">
<div style="left:2612.10px;top:120.00px;width:272.90px;height:758.80px;background:#181b1f;border-radius:3px;box-shadow:0 8px 24px rgb(1,4,9)"></div>
<div style="left:2612.10px;top:148.60px;width:272.90px;height:34.79px;background:#34373d"></div>
</div>
<svg width="3000" height="1516" viewBox="0 0 3000 1516">
<text x="2621.25" y="137.40" font-size="13.70" fill="#9292a0" letter-spacing="0.047" stroke="#9292a0" stroke-width="0.35">Data links</text>
<text x="2652.90" y="171.40" font-size="15.90" fill="#ccccdc" letter-spacing="-0.146" stroke="#ccccdc" stroke-width="0.45">WW Heizstab an</text>
<path d="M2637.20 167.60v4.6a1.5 1.5 0 0 1-1.5 1.5h-9a1.5 1.5 0 0 1-1.5-1.5v-9a1.5 1.5 0 0 1 1.5-1.5h4.6" fill="none" stroke="#7b7d86" stroke-width="1.5" stroke-linecap="round" stroke-linejoin="round"/>
<path d="M2634.80 159.00h5.2v5.2M2640.00 159.00l-8.4 8.4" fill="none" stroke="#7b7d86" stroke-width="1.5" stroke-linecap="round" stroke-linejoin="round"/>
<text x="2652.90" y="206.19" font-size="15.90" fill="#ccccdc" letter-spacing="-0.120" stroke="#ccccdc" stroke-width="0.45">WW Heizstab aus</text>
<path d="M2637.20 202.39v4.6a1.5 1.5 0 0 1-1.5 1.5h-9a1.5 1.5 0 0 1-1.5-1.5v-9a1.5 1.5 0 0 1 1.5-1.5h4.6" fill="none" stroke="#7b7d86" stroke-width="1.5" stroke-linecap="round" stroke-linejoin="round"/>
<path d="M2634.80 193.79h5.2v5.2M2640.00 193.79l-8.4 8.4" fill="none" stroke="#7b7d86" stroke-width="1.5" stroke-linecap="round" stroke-linejoin="round"/>
<text x="2652.90" y="240.98" font-size="15.90" fill="#ccccdc" letter-spacing="-0.020" stroke="#ccccdc" stroke-width="0.45">WP Warmwasserbereitung an</text>
<path d="M2637.20 237.18v4.6a1.5 1.5 0 0 1-1.5 1.5h-9a1.5 1.5 0 0 1-1.5-1.5v-9a1.5 1.5 0 0 1 1.5-1.5h4.6" fill="none" stroke="#7b7d86" stroke-width="1.5" stroke-linecap="round" stroke-linejoin="round"/>
<path d="M2634.80 228.58h5.2v5.2M2640.00 228.58l-8.4 8.4" fill="none" stroke="#7b7d86" stroke-width="1.5" stroke-linecap="round" stroke-linejoin="round"/>
<text x="2652.90" y="275.77" font-size="15.90" fill="#ccccdc" stroke="#ccccdc" stroke-width="0.45">WP Warmwasserbereitung aus</text>
<path d="M2637.20 271.97v4.6a1.5 1.5 0 0 1-1.5 1.5h-9a1.5 1.5 0 0 1-1.5-1.5v-9a1.5 1.5 0 0 1 1.5-1.5h4.6" fill="none" stroke="#7b7d86" stroke-width="1.5" stroke-linecap="round" stroke-linejoin="round"/>
<path d="M2634.80 263.37h5.2v5.2M2640.00 263.37l-8.4 8.4" fill="none" stroke="#7b7d86" stroke-width="1.5" stroke-linecap="round" stroke-linejoin="round"/>
<text x="2652.90" y="310.56" font-size="15.90" fill="#ccccdc" letter-spacing="-0.034" stroke="#ccccdc" stroke-width="0.45">Quiet Mode aus</text>
<path d="M2637.20 306.76v4.6a1.5 1.5 0 0 1-1.5 1.5h-9a1.5 1.5 0 0 1-1.5-1.5v-9a1.5 1.5 0 0 1 1.5-1.5h4.6" fill="none" stroke="#7b7d86" stroke-width="1.5" stroke-linecap="round" stroke-linejoin="round"/>
<path d="M2634.80 298.16h5.2v5.2M2640.00 298.16l-8.4 8.4" fill="none" stroke="#7b7d86" stroke-width="1.5" stroke-linecap="round" stroke-linejoin="round"/>
<text x="2652.90" y="345.35" font-size="15.90" fill="#ccccdc" letter-spacing="0.014" stroke="#ccccdc" stroke-width="0.45">QuietMode 1</text>
<path d="M2637.20 341.55v4.6a1.5 1.5 0 0 1-1.5 1.5h-9a1.5 1.5 0 0 1-1.5-1.5v-9a1.5 1.5 0 0 1 1.5-1.5h4.6" fill="none" stroke="#7b7d86" stroke-width="1.5" stroke-linecap="round" stroke-linejoin="round"/>
<path d="M2634.80 332.95h5.2v5.2M2640.00 332.95l-8.4 8.4" fill="none" stroke="#7b7d86" stroke-width="1.5" stroke-linecap="round" stroke-linejoin="round"/>
<text x="2652.90" y="380.14" font-size="15.90" fill="#ccccdc" letter-spacing="0.014" stroke="#ccccdc" stroke-width="0.45">QuietMode 2</text>
<path d="M2637.20 376.34v4.6a1.5 1.5 0 0 1-1.5 1.5h-9a1.5 1.5 0 0 1-1.5-1.5v-9a1.5 1.5 0 0 1 1.5-1.5h4.6" fill="none" stroke="#7b7d86" stroke-width="1.5" stroke-linecap="round" stroke-linejoin="round"/>
<path d="M2634.80 367.74h5.2v5.2M2640.00 367.74l-8.4 8.4" fill="none" stroke="#7b7d86" stroke-width="1.5" stroke-linecap="round" stroke-linejoin="round"/>
<text x="2652.90" y="414.93" font-size="15.90" fill="#ccccdc" letter-spacing="0.014" stroke="#ccccdc" stroke-width="0.45">QuietMode 3</text>
<path d="M2637.20 411.13v4.6a1.5 1.5 0 0 1-1.5 1.5h-9a1.5 1.5 0 0 1-1.5-1.5v-9a1.5 1.5 0 0 1 1.5-1.5h4.6" fill="none" stroke="#7b7d86" stroke-width="1.5" stroke-linecap="round" stroke-linejoin="round"/>
<path d="M2634.80 402.53h5.2v5.2M2640.00 402.53l-8.4 8.4" fill="none" stroke="#7b7d86" stroke-width="1.5" stroke-linecap="round" stroke-linejoin="round"/>
<text x="2652.90" y="449.72" font-size="15.90" fill="#ccccdc" letter-spacing="-0.253" stroke="#ccccdc" stroke-width="0.45">WP Mode nur WW</text>
<path d="M2637.20 445.92v4.6a1.5 1.5 0 0 1-1.5 1.5h-9a1.5 1.5 0 0 1-1.5-1.5v-9a1.5 1.5 0 0 1 1.5-1.5h4.6" fill="none" stroke="#7b7d86" stroke-width="1.5" stroke-linecap="round" stroke-linejoin="round"/>
<path d="M2634.80 437.32h5.2v5.2M2640.00 437.32l-8.4 8.4" fill="none" stroke="#7b7d86" stroke-width="1.5" stroke-linecap="round" stroke-linejoin="round"/>
<text x="2652.90" y="484.51" font-size="15.90" fill="#ccccdc" letter-spacing="-0.266" stroke="#ccccdc" stroke-width="0.45">WP Mode Heizen + WW</text>
<path d="M2637.20 480.71v4.6a1.5 1.5 0 0 1-1.5 1.5h-9a1.5 1.5 0 0 1-1.5-1.5v-9a1.5 1.5 0 0 1 1.5-1.5h4.6" fill="none" stroke="#7b7d86" stroke-width="1.5" stroke-linecap="round" stroke-linejoin="round"/>
<path d="M2634.80 472.11h5.2v5.2M2640.00 472.11l-8.4 8.4" fill="none" stroke="#7b7d86" stroke-width="1.5" stroke-linecap="round" stroke-linejoin="round"/>
<text x="2652.90" y="519.30" font-size="15.90" fill="#ccccdc" letter-spacing="-0.182" stroke="#ccccdc" stroke-width="0.45">WP Mode Auto + WW</text>
<path d="M2637.20 515.50v4.6a1.5 1.5 0 0 1-1.5 1.5h-9a1.5 1.5 0 0 1-1.5-1.5v-9a1.5 1.5 0 0 1 1.5-1.5h4.6" fill="none" stroke="#7b7d86" stroke-width="1.5" stroke-linecap="round" stroke-linejoin="round"/>
<path d="M2634.80 506.90h5.2v5.2M2640.00 506.90l-8.4 8.4" fill="none" stroke="#7b7d86" stroke-width="1.5" stroke-linecap="round" stroke-linejoin="round"/>
<text x="2652.90" y="554.09" font-size="15.90" fill="#ccccdc" letter-spacing="-0.016" stroke="#ccccdc" stroke-width="0.45">Warmwasser 48 °</text>
<path d="M2637.20 550.29v4.6a1.5 1.5 0 0 1-1.5 1.5h-9a1.5 1.5 0 0 1-1.5-1.5v-9a1.5 1.5 0 0 1 1.5-1.5h4.6" fill="none" stroke="#7b7d86" stroke-width="1.5" stroke-linecap="round" stroke-linejoin="round"/>
<path d="M2634.80 541.69h5.2v5.2M2640.00 541.69l-8.4 8.4" fill="none" stroke="#7b7d86" stroke-width="1.5" stroke-linecap="round" stroke-linejoin="round"/>
<text x="2652.90" y="588.88" font-size="15.90" fill="#ccccdc" letter-spacing="-0.016" stroke="#ccccdc" stroke-width="0.45">Warmwasser 52 °</text>
<path d="M2637.20 585.08v4.6a1.5 1.5 0 0 1-1.5 1.5h-9a1.5 1.5 0 0 1-1.5-1.5v-9a1.5 1.5 0 0 1 1.5-1.5h4.6" fill="none" stroke="#7b7d86" stroke-width="1.5" stroke-linecap="round" stroke-linejoin="round"/>
<path d="M2634.80 576.48h5.2v5.2M2640.00 576.48l-8.4 8.4" fill="none" stroke="#7b7d86" stroke-width="1.5" stroke-linecap="round" stroke-linejoin="round"/>
<text x="2652.90" y="623.67" font-size="15.90" fill="#ccccdc" letter-spacing="-0.016" stroke="#ccccdc" stroke-width="0.45">Warmwasser 55 °</text>
<path d="M2637.20 619.87v4.6a1.5 1.5 0 0 1-1.5 1.5h-9a1.5 1.5 0 0 1-1.5-1.5v-9a1.5 1.5 0 0 1 1.5-1.5h4.6" fill="none" stroke="#7b7d86" stroke-width="1.5" stroke-linecap="round" stroke-linejoin="round"/>
<path d="M2634.80 611.27h5.2v5.2M2640.00 611.27l-8.4 8.4" fill="none" stroke="#7b7d86" stroke-width="1.5" stroke-linecap="round" stroke-linejoin="round"/>
<text x="2652.90" y="658.46" font-size="15.90" fill="#ccccdc" letter-spacing="0.107" stroke="#ccccdc" stroke-width="0.45">Legionellenschaltung ein</text>
<path d="M2637.20 654.66v4.6a1.5 1.5 0 0 1-1.5 1.5h-9a1.5 1.5 0 0 1-1.5-1.5v-9a1.5 1.5 0 0 1 1.5-1.5h4.6" fill="none" stroke="#7b7d86" stroke-width="1.5" stroke-linecap="round" stroke-linejoin="round"/>
<path d="M2634.80 646.06h5.2v5.2M2640.00 646.06l-8.4 8.4" fill="none" stroke="#7b7d86" stroke-width="1.5" stroke-linecap="round" stroke-linejoin="round"/>
<text x="2652.90" y="693.25" font-size="15.90" fill="#ccccdc" letter-spacing="0.098" stroke="#ccccdc" stroke-width="0.45">Legionellenschaltung aus</text>
<path d="M2637.20 689.45v4.6a1.5 1.5 0 0 1-1.5 1.5h-9a1.5 1.5 0 0 1-1.5-1.5v-9a1.5 1.5 0 0 1 1.5-1.5h4.6" fill="none" stroke="#7b7d86" stroke-width="1.5" stroke-linecap="round" stroke-linejoin="round"/>
<path d="M2634.80 680.85h5.2v5.2M2640.00 680.85l-8.4 8.4" fill="none" stroke="#7b7d86" stroke-width="1.5" stroke-linecap="round" stroke-linejoin="round"/>
<text x="2652.90" y="728.04" font-size="15.90" fill="#ccccdc" letter-spacing="0.124" stroke="#ccccdc" stroke-width="0.45">Vorlauftemperatur + 2°</text>
<path d="M2637.20 724.24v4.6a1.5 1.5 0 0 1-1.5 1.5h-9a1.5 1.5 0 0 1-1.5-1.5v-9a1.5 1.5 0 0 1 1.5-1.5h4.6" fill="none" stroke="#7b7d86" stroke-width="1.5" stroke-linecap="round" stroke-linejoin="round"/>
<path d="M2634.80 715.64h5.2v5.2M2640.00 715.64l-8.4 8.4" fill="none" stroke="#7b7d86" stroke-width="1.5" stroke-linecap="round" stroke-linejoin="round"/>
<text x="2652.90" y="762.83" font-size="15.90" fill="#ccccdc" letter-spacing="0.140" stroke="#ccccdc" stroke-width="0.45">Vorlauftemperatur - 2°</text>
<path d="M2637.20 759.03v4.6a1.5 1.5 0 0 1-1.5 1.5h-9a1.5 1.5 0 0 1-1.5-1.5v-9a1.5 1.5 0 0 1 1.5-1.5h4.6" fill="none" stroke="#7b7d86" stroke-width="1.5" stroke-linecap="round" stroke-linejoin="round"/>
<path d="M2634.80 750.43h5.2v5.2M2640.00 750.43l-8.4 8.4" fill="none" stroke="#7b7d86" stroke-width="1.5" stroke-linecap="round" stroke-linejoin="round"/>
<text x="2652.90" y="797.62" font-size="15.90" fill="#ccccdc" letter-spacing="0.189" stroke="#ccccdc" stroke-width="0.45">Vorlauftemperatur Default</text>
<path d="M2637.20 793.82v4.6a1.5 1.5 0 0 1-1.5 1.5h-9a1.5 1.5 0 0 1-1.5-1.5v-9a1.5 1.5 0 0 1 1.5-1.5h4.6" fill="none" stroke="#7b7d86" stroke-width="1.5" stroke-linecap="round" stroke-linejoin="round"/>
<path d="M2634.80 785.22h5.2v5.2M2640.00 785.22l-8.4 8.4" fill="none" stroke="#7b7d86" stroke-width="1.5" stroke-linecap="round" stroke-linejoin="round"/>
<text x="2652.90" y="832.41" font-size="15.90" fill="#ccccdc" letter-spacing="-0.072" stroke="#ccccdc" stroke-width="0.45">Wärempumpe aus</text>
<path d="M2637.20 828.61v4.6a1.5 1.5 0 0 1-1.5 1.5h-9a1.5 1.5 0 0 1-1.5-1.5v-9a1.5 1.5 0 0 1 1.5-1.5h4.6" fill="none" stroke="#7b7d86" stroke-width="1.5" stroke-linecap="round" stroke-linejoin="round"/>
<path d="M2634.80 820.01h5.2v5.2M2640.00 820.01l-8.4 8.4" fill="none" stroke="#7b7d86" stroke-width="1.5" stroke-linecap="round" stroke-linejoin="round"/>
<text x="2652.90" y="867.20" font-size="15.90" fill="#ccccdc" letter-spacing="-0.047" stroke="#ccccdc" stroke-width="0.45">Wärmepumpe ein</text>
<path d="M2637.20 863.40v4.6a1.5 1.5 0 0 1-1.5 1.5h-9a1.5 1.5 0 0 1-1.5-1.5v-9a1.5 1.5 0 0 1 1.5-1.5h4.6" fill="none" stroke="#7b7d86" stroke-width="1.5" stroke-linecap="round" stroke-linejoin="round"/>
<path d="M2634.80 854.80h5.2v5.2M2640.00 854.80l-8.4 8.4" fill="none" stroke="#7b7d86" stroke-width="1.5" stroke-linecap="round" stroke-linejoin="round"/>
</svg>
</div></body></html>
